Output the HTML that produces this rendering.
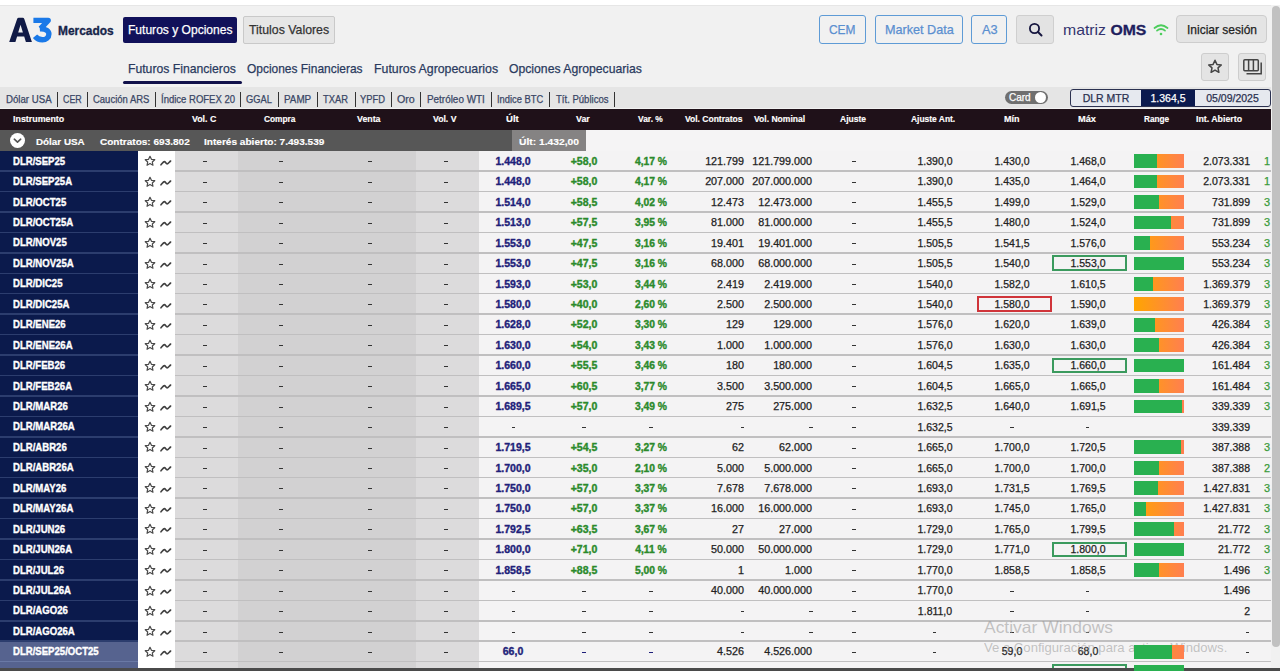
<!DOCTYPE html><html><head><meta charset="utf-8"><style>
*{margin:0;padding:0;box-sizing:border-box}
html,body{width:1280px;height:671px;overflow:hidden;background:#f1f1f1;font-family:"Liberation Sans",sans-serif}
.a{position:absolute;white-space:nowrap}
.t{position:absolute;white-space:nowrap;line-height:1;-webkit-text-stroke:0.25px currentColor}
.t[style*="bold"]{-webkit-text-stroke:0.35px currentColor}
</style></head><body><div class="a" style="left:0;top:0;width:1280px;height:5px;background:#fff"></div>
<div class="a" style="left:0;top:5px;width:1280px;height:1px;background:#e6e6e6"></div>
<svg class="a" style="left:0;top:0" width="60" height="50" viewBox="0 0 60 50"><path fill-rule="evenodd" fill="#101a46" d="M9.2 42 L17.1 18.9 Q17.5 17.7 18.7 17.7 L22.7 17.7 Q23.9 17.7 24.3 18.9 L31.9 42 L25.9 42 L24.2 36.6 L17.1 36.6 L15.4 42 Z M18.2 32.4 L22.9 32.4 L20.55 24.8 Z"></path><path fill="none" stroke="#1a79e8" stroke-width="5.4" stroke-linejoin="round" d="M33.4 20.4 L48.2 20.4 L40.6 28.6"></path><path fill="none" stroke="#1a79e8" stroke-width="5.4" d="M39.8 28.9 C46 28.5 48.9 31 48.9 34 C48.9 37.6 46 39.8 42.4 39.8 C39.5 39.8 37 38.8 35 36.3"></path></svg>
<div class="t" style="left: 58.4px; top: 24px; font-size: 13.5px; font-weight: bold; color: rgb(23, 37, 74); transform: scaleX(0.8821); transform-origin: 0px 0px;">Mercados</div>
<div class="a" style="left:123px;top:17px;width:114px;height:26px;background:#11115a;border-radius:2px"></div>
<div class="t" style="left: 128.3px; top: 23.3px; font-size: 13.5px; color: rgb(255, 255, 255); transform: scaleX(0.8927); transform-origin: 0px 0px;">Futuros y Opciones</div>
<div class="a" style="left:243px;top:16px;width:92px;height:28px;background:#e6e6e6;border:1px solid #c9c9c9;border-radius:2px"></div>
<div class="t" style="left: 248.8px; top: 23.3px; font-size: 13.5px; color: rgb(51, 51, 51); transform: scaleX(0.9123); transform-origin: 0px 0px;">Titulos Valores</div>
<div class="t" style="left: 128.2px; top: 62.2px; font-size: 13px; color: rgb(42, 58, 94); transform: scaleX(0.9383); transform-origin: 0px 0px;">Futuros Financieros</div>
<div class="t" style="left: 246.9px; top: 62.2px; font-size: 13px; color: rgb(42, 58, 94); transform: scaleX(0.9194); transform-origin: 0px 0px;">Opciones Financieras</div>
<div class="t" style="left: 374px; top: 62.2px; font-size: 13px; color: rgb(42, 58, 94); transform: scaleX(0.9488); transform-origin: 0px 0px;">Futuros Agropecuarios</div>
<div class="t" style="left: 509px; top: 62.2px; font-size: 13px; color: rgb(42, 58, 94); transform: scaleX(0.9382); transform-origin: 0px 0px;">Opciones Agropecuarias</div>
<div class="a" style="left:123px;top:81px;width:119px;height:2.5px;background:#10104a;border-radius:2px"></div>
<div class="a" style="left:819px;top:15px;width:47px;height:28.5px;border:1.5px solid #5e9bd6;border-radius:3px"></div>
<div class="t" style="left: 829px; top: 23.2px; font-size: 13px; color: rgb(90, 143, 208); transform: scaleX(0.9173); transform-origin: 0px 0px;">CEM</div>
<div class="a" style="left:875px;top:15px;width:88px;height:28.5px;border:1.5px solid #5e9bd6;border-radius:3px"></div>
<div class="t" style="left: 884.8px; top: 23.2px; font-size: 13px; color: rgb(90, 143, 208); transform: scaleX(0.9716); transform-origin: 0px 0px;">Market Data</div>
<div class="a" style="left:971px;top:15px;width:36px;height:28.5px;border:1.5px solid #5e9bd6;border-radius:3px"></div>
<div class="t" style="left: 981.9px; top: 23.2px; font-size: 13px; color: rgb(90, 143, 208); transform: scaleX(0.9807); transform-origin: 0px 0px;">A3</div>
<div class="a" style="left:1016px;top:15px;width:38px;height:29px;background:#e3e3e3;border:1px solid #cfcfcf;border-radius:3px"></div>
<svg class="a" style="left:1028.2px;top:21.7px" width="16" height="16" viewBox="0 0 16 16"><circle cx="6.5" cy="6.5" r="4.6" fill="none" stroke="#16163f" stroke-width="1.8"></circle><line x1="10" y1="10" x2="13.5" y2="13.5" stroke="#16163f" stroke-width="2" stroke-linecap="round"></line></svg>
<div class="t" style="left: 1062.6px; top: 21.5px; font-size: 15px; color: rgb(52, 52, 110); -webkit-text-stroke: 0px; transform: scaleX(1.0534); transform-origin: 0px 0px;">matriz <b style="color:#1f1f5e;-webkit-text-stroke:0.3px #1f1f5e">OMS</b></div>
<svg class="a" style="left:1153px;top:23px" width="16" height="13" viewBox="0 0 16 13"><path d="M1.5 5 Q8 -0.5 14.5 5" fill="none" stroke="#4ccd5c" stroke-width="1.7" stroke-linecap="round"></path><path d="M4 7.7 Q8 4.3 12 7.7" fill="none" stroke="#4ccd5c" stroke-width="1.7" stroke-linecap="round"></path><circle cx="8" cy="11" r="1.3" fill="#4ccd5c"></circle></svg>
<div class="a" style="left:1176px;top:15px;width:91px;height:28px;background:#e4e4e4;border:1px solid #cdcdcd;border-radius:4px"></div>
<div class="t" style="left: 1186.6px; top: 23.2px; font-size: 13px; color: rgb(34, 34, 34); transform: scaleX(0.9226); transform-origin: 0px 0px;">Iniciar sesión</div>
<div class="a" style="left:1201px;top:53px;width:28px;height:28px;background:#e4e4e4;border:1px solid #cdcdcd;border-radius:3px"></div>
<svg class="a" style="left:1207px;top:59px" width="16" height="16" viewBox="0 0 16 16"><path d="M8 1.3 L9.9 5.4 L14.3 5.9 L11 8.9 L11.9 13.3 L8 11.1 L4.1 13.3 L5 8.9 L1.7 5.9 L6.1 5.4 Z" fill="none" stroke="#444" stroke-width="1.5" stroke-linejoin="round"></path></svg>
<div class="a" style="left:1238px;top:53px;width:28px;height:28px;background:#e4e4e4;border:1px solid #cdcdcd;border-radius:3px"></div>
<svg class="a" style="left:1243px;top:59px" width="20" height="16" viewBox="0 0 20 16"><rect x="0.8" y="0.8" width="14.5" height="11" rx="1" fill="none" stroke="#444" stroke-width="1.5"></rect><line x1="5.6" y1="0.8" x2="5.6" y2="11.8" stroke="#444" stroke-width="1.5"></line><line x1="10.4" y1="0.8" x2="10.4" y2="11.8" stroke="#444" stroke-width="1.5"></line><path d="M18.2 3.5V14.8H3.5" fill="none" stroke="#444" stroke-width="1.5"></path></svg>
<div class="a" style="left:0;top:87px;width:1271px;height:21px;background:#e5e5e5"></div>
<div class="t" style="left: 5.6px; top: 94.5px; font-size: 10px; color: rgb(58, 71, 102); transform: scaleX(0.9661); transform-origin: 0px 0px;">Dólar USA</div>
<div class="a" style="left:57.3px;top:92px;width:1px;height:14.5px;background:#333"></div>
<div class="t" style="left: 62.5px; top: 94.5px; font-size: 10px; color: rgb(58, 71, 102); transform: scaleX(0.8876); transform-origin: 0px 0px;">CER</div>
<div class="a" style="left:87.0px;top:92px;width:1px;height:14.5px;background:#333"></div>
<div class="t" style="left: 93px; top: 94.5px; font-size: 10px; color: rgb(58, 71, 102); transform: scaleX(0.9481); transform-origin: 0px 0px;">Caución ARS</div>
<div class="a" style="left:154.8px;top:92px;width:1px;height:14.5px;background:#333"></div>
<div class="t" style="left: 161px; top: 94.5px; font-size: 10px; color: rgb(58, 71, 102); transform: scaleX(0.951); transform-origin: 0px 0px;">Índice ROFEX 20</div>
<div class="a" style="left:240.1px;top:92px;width:1px;height:14.5px;background:#333"></div>
<div class="t" style="left: 246px; top: 94.5px; font-size: 10px; color: rgb(58, 71, 102); transform: scaleX(0.9318); transform-origin: 0px 0px;">GGAL</div>
<div class="a" style="left:277.5px;top:92px;width:1px;height:14.5px;background:#333"></div>
<div class="t" style="left: 284.4px; top: 94.5px; font-size: 10px; color: rgb(58, 71, 102); transform: scaleX(0.9852); transform-origin: 0px 0px;">PAMP</div>
<div class="a" style="left:317.3px;top:92px;width:1px;height:14.5px;background:#333"></div>
<div class="t" style="left: 323.4px; top: 94.5px; font-size: 10px; color: rgb(58, 71, 102); transform: scaleX(0.9373); transform-origin: 0px 0px;">TXAR</div>
<div class="a" style="left:354.8px;top:92px;width:1px;height:14.5px;background:#333"></div>
<div class="t" style="left: 360.3px; top: 94.5px; font-size: 10px; color: rgb(58, 71, 102); transform: scaleX(0.9373); transform-origin: 0px 0px;">YPFD</div>
<div class="a" style="left:391.1px;top:92px;width:1px;height:14.5px;background:#333"></div>
<div class="t" style="left: 397.2px; top: 94.5px; font-size: 10px; color: rgb(58, 71, 102); transform: scaleX(1.0677); transform-origin: 0px 0px;">Oro</div>
<div class="a" style="left:420.1px;top:92px;width:1px;height:14.5px;background:#333"></div>
<div class="t" style="left: 426.9px; top: 94.5px; font-size: 10px; color: rgb(58, 71, 102); transform: scaleX(0.9904); transform-origin: 0px 0px;">Petróleo WTI</div>
<div class="a" style="left:490.5px;top:92px;width:1px;height:14.5px;background:#333"></div>
<div class="t" style="left: 497.2px; top: 94.5px; font-size: 10px; color: rgb(58, 71, 102); transform: scaleX(0.9339); transform-origin: 0px 0px;">Indice BTC</div>
<div class="a" style="left:549.2px;top:92px;width:1px;height:14.5px;background:#333"></div>
<div class="t" style="left: 555.6px; top: 94.5px; font-size: 10px; color: rgb(58, 71, 102); transform: scaleX(0.954); transform-origin: 0px 0px;">Tít. Públicos</div>
<div class="a" style="left:613.9px;top:92px;width:1px;height:14.5px;background:#333"></div>
<div class="a" style="left:1004.5px;top:91px;width:43.5px;height:13px;background:#6f6f6f;border-radius:7px"></div>
<div class="t" style="left:1009px;top:93px;font-size:10px;color:#fff">Card</div>
<div class="a" style="left:1035px;top:92px;width:11px;height:11px;background:#fff;border-radius:50%"></div>
<div class="a" style="left:1069.5px;top:89px;width:201px;height:17.5px;background:#e6e9ef;border:1.5px solid #2b3150;border-radius:3px;overflow:hidden"><div class="a" style="left:70.5px;top:0;width:53.5px;height:100%;background:#0b1a4e"></div></div>
<div class="t" style="left:1071px;width:70px;text-align:center;top:93px;font-size:10.5px;color:#2b3150">DLR MTR</div>
<div class="t" style="left:1141px;width:54px;text-align:center;top:93px;font-size:10.5px;color:#fff">1.364,5</div>
<div class="t" style="left:1195px;width:75px;text-align:center;top:93px;font-size:10.5px;color:#2b3150">05/09/2025</div>
<div class="a" style="left:0;top:109px;width:1271px;height:20.5px;background:#1f1119"></div>
<div class="t" style="left: 13px; top: 115px; font-size: 9px; font-weight: bold; color: rgb(255, 255, 255); -webkit-text-stroke: 0.15px rgb(255, 255, 255); transform: scaleX(0.9853); transform-origin: 0px 0px;">Instrumento</div>
<div class="t" style="left: 192px; top: 115px; font-size: 9px; font-weight: bold; color: rgb(255, 255, 255); -webkit-text-stroke: 0.15px rgb(255, 255, 255); transform: scaleX(0.9761); transform-origin: 0px 0px;">Vol. C</div>
<div class="t" style="left: 264.25px; top: 115px; font-size: 9px; font-weight: bold; color: rgb(255, 255, 255); -webkit-text-stroke: 0.15px rgb(255, 255, 255); transform: scaleX(0.926); transform-origin: 0px 0px;">Compra</div>
<div class="t" style="left: 357px; top: 115px; font-size: 9px; font-weight: bold; color: rgb(255, 255, 255); -webkit-text-stroke: 0.15px rgb(255, 255, 255); transform: scaleX(0.9785); transform-origin: 0px 0px;">Venta</div>
<div class="t" style="left: 433.25px; top: 115px; font-size: 9px; font-weight: bold; color: rgb(255, 255, 255); -webkit-text-stroke: 0.15px rgb(255, 255, 255); transform: scaleX(0.9653); transform-origin: 0px 0px;">Vol. V</div>
<div class="t" style="left: 505.5px; top: 115px; font-size: 9px; font-weight: bold; color: rgb(255, 255, 255); -webkit-text-stroke: 0.15px rgb(255, 255, 255); transform: scaleX(1.0625); transform-origin: 0px 0px;">Últ</div>
<div class="t" style="left: 576.25px; top: 115px; font-size: 9px; font-weight: bold; color: rgb(255, 255, 255); -webkit-text-stroke: 0.15px rgb(255, 255, 255); transform: scaleX(0.981); transform-origin: 0px 0px;">Var</div>
<div class="t" style="left: 638px; top: 115px; font-size: 9px; font-weight: bold; color: rgb(255, 255, 255); -webkit-text-stroke: 0.15px rgb(255, 255, 255); transform: scaleX(0.9347); transform-origin: 0px 0px;">Var. %</div>
<div class="t" style="left: 684.5px; top: 115px; font-size: 9px; font-weight: bold; color: rgb(255, 255, 255); -webkit-text-stroke: 0.15px rgb(255, 255, 255); transform: scaleX(0.945); transform-origin: 0px 0px;">Vol. Contratos</div>
<div class="t" style="left: 753.7px; top: 115px; font-size: 9px; font-weight: bold; color: rgb(255, 255, 255); -webkit-text-stroke: 0.15px rgb(255, 255, 255); transform: scaleX(0.949); transform-origin: 0px 0px;">Vol. Nominal</div>
<div class="t" style="left: 840.4px; top: 115px; font-size: 9px; font-weight: bold; color: rgb(255, 255, 255); -webkit-text-stroke: 0.15px rgb(255, 255, 255); transform: scaleX(0.9449); transform-origin: 0px 0px;">Ajuste</div>
<div class="t" style="left: 911.3px; top: 115px; font-size: 9px; font-weight: bold; color: rgb(255, 255, 255); -webkit-text-stroke: 0.15px rgb(255, 255, 255); transform: scaleX(0.937); transform-origin: 0px 0px;">Ajuste Ant.</div>
<div class="t" style="left: 1003.9px; top: 115px; font-size: 9px; font-weight: bold; color: rgb(255, 255, 255); -webkit-text-stroke: 0.15px rgb(255, 255, 255); transform: scaleX(1); transform-origin: 0px 0px;">Mín</div>
<div class="t" style="left: 1078px; top: 115px; font-size: 9px; font-weight: bold; color: rgb(255, 255, 255); -webkit-text-stroke: 0.15px rgb(255, 255, 255); transform: scaleX(1.0277); transform-origin: 0px 0px;">Máx</div>
<div class="t" style="left: 1143.5px; top: 115px; font-size: 9px; font-weight: bold; color: rgb(255, 255, 255); -webkit-text-stroke: 0.15px rgb(255, 255, 255); transform: scaleX(0.9158); transform-origin: 0px 0px;">Range</div>
<div class="t" style="left: 1196px; top: 115px; font-size: 9px; font-weight: bold; color: rgb(255, 255, 255); -webkit-text-stroke: 0.15px rgb(255, 255, 255); transform: scaleX(0.9752); transform-origin: 0px 0px;">Int. Abierto</div>
<div class="a" style="left:0;top:129.5px;width:512px;height:21px;background:#575757"></div>
<div class="a" style="left:512px;top:129.5px;width:74px;height:21px;background:#858383"></div>
<div class="a" style="left:586px;top:129.5px;width:685px;height:21px;background:#f5f4f5"></div>
<div class="a" style="left:10px;top:133px;width:15px;height:15px;background:#fff;border-radius:50%"></div>
<svg class="a" style="left:10px;top:133px" width="15" height="15" viewBox="0 0 15 15"><path d="M4.3 6.2 7.5 9.2 10.7 6.2" fill="none" stroke="#555" stroke-width="1.6" stroke-linecap="round" stroke-linejoin="round"></path></svg>
<div class="t" style="left: 35.75px; top: 136.6px; font-size: 9.8px; font-weight: bold; color: rgb(255, 255, 255); -webkit-text-stroke: 0.15px rgb(255, 255, 255); transform: scaleX(1.0041); transform-origin: 0px 0px;">Dólar USA</div>
<div class="t" style="left: 99.5px; top: 136.6px; font-size: 9.8px; font-weight: bold; color: rgb(255, 255, 255); -webkit-text-stroke: 0.15px rgb(255, 255, 255); transform: scaleX(1.0237); transform-origin: 0px 0px;">Contratos: 693.802</div>
<div class="t" style="left: 203.75px; top: 136.6px; font-size: 9.8px; font-weight: bold; color: rgb(255, 255, 255); -webkit-text-stroke: 0.15px rgb(255, 255, 255); transform: scaleX(1.0287); transform-origin: 0px 0px;">Interés abierto: 7.493.539</div>
<div class="t" style="left: 519px; top: 137px; font-size: 9.8px; font-weight: bold; color: rgb(255, 255, 255); -webkit-text-stroke: 0.15px rgb(255, 255, 255); transform: scaleX(1.0492); transform-origin: 0px 0px;">Últ: 1.432,00</div>
<div class="a" style="left:0;top:150.5px;width:138px;height:520.5px;background:#0b1a4c"></div>
<div class="a" style="left:138px;top:150.5px;width:37px;height:520.5px;background:#fff"></div>
<div class="a" style="left:175px;top:150.5px;width:63px;height:520.5px;background:#dcdbdc"></div>
<div class="a" style="left:238px;top:150.5px;width:178px;height:520.5px;background:#d2d1d2"></div>
<div class="a" style="left:416px;top:150.5px;width:63px;height:520.5px;background:#dcdbdc"></div>
<div class="a" style="left:479px;top:150.5px;width:792px;height:520.5px;background:#f4f3f4"></div>
<div class="a" style="left:0;top:170.34px;width:138px;height:1.5px;background:#2c3d6e"></div>
<div class="a" style="left:175px;top:170.34px;width:1096px;height:1.5px;background:#c0bfc0"></div>
<div class="t" style="left:13px;top:156.70px;font-size:10.3px;font-weight:bold;color:#fff;transform:scaleX(0.93);transform-origin:0 0">DLR/SEP25</div>
<svg class="a" style="left:143.8px;top:155.30px" width="12" height="12" viewBox="0 0 24 24"><path d="M12 2.5l2.9 6.1 6.6.8-4.9 4.5 1.3 6.6L12 17.2l-5.9 3.3 1.3-6.6-4.9-4.5 6.6-.8z" fill="none" stroke="#4a4a4a" stroke-width="2.4" stroke-linejoin="round"></path></svg>
<svg class="a" style="left:159.5px;top:158.50px" width="12" height="7" viewBox="0 0 12 7"><path d="M1 5.8 C2.3 4.3 3.4 2.6 4.4 2.6 C5.5 2.6 6 4.9 7.1 4.9 C8.2 4.9 9.4 2.9 10.6 2" fill="none" stroke="#404040" stroke-width="1.6" stroke-linecap="round"></path></svg>
<div class="a" style="left:203.25px;top:161px;width:3.5px;height:1px;background:#333"></div>
<div class="a" style="left:279.25px;top:161px;width:3.5px;height:1px;background:#333"></div>
<div class="a" style="left:368.25px;top:161px;width:3.5px;height:1px;background:#333"></div>
<div class="a" style="left:444.25px;top:161px;width:3.5px;height:1px;background:#333"></div>
<div class="t" style="left:473.30px;width:80px;text-align:center;top:156.90px;font-size:10px;font-weight:bold;color:#1f1f7a;transform:scaleX(1.055);transform-origin:50% 0">1.448,0</div>
<div class="t" style="left:544.20px;width:80px;text-align:center;top:156.90px;font-size:10px;font-weight:bold;color:#2b8a2b;transform:scaleX(1.05);transform-origin:50% 0">+58,0</div>
<div class="t" style="left:611.00px;width:80px;text-align:center;top:156.90px;font-size:10px;font-weight:bold;color:#2b8a2b;transform:scaleX(1.03);transform-origin:50% 0">4,17 %</div>
<div class="t" style="left:624.00px;width:120px;text-align:right;top:156.90px;font-size:10px;font-weight:normal;color:#222;transform:scaleX(1.075);transform-origin:100% 0">121.799</div>
<div class="t" style="left:692.30px;width:120px;text-align:right;top:156.90px;font-size:10px;font-weight:normal;color:#222;transform:scaleX(1.075);transform-origin:100% 0">121.799.000</div>
<div class="a" style="left:852.25px;top:161px;width:3.5px;height:1px;background:#333"></div>
<div class="t" style="left:894.50px;width:80px;text-align:center;top:156.90px;font-size:10px;font-weight:normal;color:#222;transform:scaleX(1.05);transform-origin:50% 0">1.390,0</div>
<div class="t" style="left:972.00px;width:80px;text-align:center;top:156.90px;font-size:10px;font-weight:normal;color:#222;transform:scaleX(1.05);transform-origin:50% 0">1.430,0</div>
<div class="t" style="left:1047.50px;width:80px;text-align:center;top:156.90px;font-size:10px;font-weight:normal;color:#222;transform:scaleX(1.05);transform-origin:50% 0">1.468,0</div>
<div class="t" style="left:1129.50px;width:120px;text-align:right;top:156.90px;font-size:10px;font-weight:normal;color:#222;transform:scaleX(1.05);transform-origin:100% 0">2.073.331</div>
<div class="t" style="left:1264.00px;top:156.90px;font-size:10px;font-weight:normal;color:#3a9a3a;transform:scaleX(1.09);transform-origin:0 0">1</div>
<div class="a" style="left:0;top:190.78px;width:138px;height:1.5px;background:#2c3d6e"></div>
<div class="a" style="left:175px;top:190.78px;width:1096px;height:1.5px;background:#c0bfc0"></div>
<div class="t" style="left:13px;top:177.14px;font-size:10.3px;font-weight:bold;color:#fff;transform:scaleX(0.93);transform-origin:0 0">DLR/SEP25A</div>
<svg class="a" style="left:143.8px;top:175.74px" width="12" height="12" viewBox="0 0 24 24"><path d="M12 2.5l2.9 6.1 6.6.8-4.9 4.5 1.3 6.6L12 17.2l-5.9 3.3 1.3-6.6-4.9-4.5 6.6-.8z" fill="none" stroke="#4a4a4a" stroke-width="2.4" stroke-linejoin="round"></path></svg>
<svg class="a" style="left:159.5px;top:178.94px" width="12" height="7" viewBox="0 0 12 7"><path d="M1 5.8 C2.3 4.3 3.4 2.6 4.4 2.6 C5.5 2.6 6 4.9 7.1 4.9 C8.2 4.9 9.4 2.9 10.6 2" fill="none" stroke="#404040" stroke-width="1.6" stroke-linecap="round"></path></svg>
<div class="a" style="left:203.25px;top:182px;width:3.5px;height:1px;background:#333"></div>
<div class="a" style="left:279.25px;top:182px;width:3.5px;height:1px;background:#333"></div>
<div class="a" style="left:368.25px;top:182px;width:3.5px;height:1px;background:#333"></div>
<div class="a" style="left:444.25px;top:182px;width:3.5px;height:1px;background:#333"></div>
<div class="t" style="left:473.30px;width:80px;text-align:center;top:177.34px;font-size:10px;font-weight:bold;color:#1f1f7a;transform:scaleX(1.055);transform-origin:50% 0">1.448,0</div>
<div class="t" style="left:544.20px;width:80px;text-align:center;top:177.34px;font-size:10px;font-weight:bold;color:#2b8a2b;transform:scaleX(1.05);transform-origin:50% 0">+58,0</div>
<div class="t" style="left:611.00px;width:80px;text-align:center;top:177.34px;font-size:10px;font-weight:bold;color:#2b8a2b;transform:scaleX(1.03);transform-origin:50% 0">4,17 %</div>
<div class="t" style="left:624.00px;width:120px;text-align:right;top:177.34px;font-size:10px;font-weight:normal;color:#222;transform:scaleX(1.075);transform-origin:100% 0">207.000</div>
<div class="t" style="left:692.30px;width:120px;text-align:right;top:177.34px;font-size:10px;font-weight:normal;color:#222;transform:scaleX(1.075);transform-origin:100% 0">207.000.000</div>
<div class="a" style="left:852.25px;top:182px;width:3.5px;height:1px;background:#333"></div>
<div class="t" style="left:894.50px;width:80px;text-align:center;top:177.34px;font-size:10px;font-weight:normal;color:#222;transform:scaleX(1.05);transform-origin:50% 0">1.390,0</div>
<div class="t" style="left:972.00px;width:80px;text-align:center;top:177.34px;font-size:10px;font-weight:normal;color:#222;transform:scaleX(1.05);transform-origin:50% 0">1.435,0</div>
<div class="t" style="left:1047.50px;width:80px;text-align:center;top:177.34px;font-size:10px;font-weight:normal;color:#222;transform:scaleX(1.05);transform-origin:50% 0">1.464,0</div>
<div class="t" style="left:1129.50px;width:120px;text-align:right;top:177.34px;font-size:10px;font-weight:normal;color:#222;transform:scaleX(1.05);transform-origin:100% 0">2.073.331</div>
<div class="t" style="left:1264.00px;top:177.34px;font-size:10px;font-weight:normal;color:#3a9a3a;transform:scaleX(1.09);transform-origin:0 0">1</div>
<div class="a" style="left:0;top:211.22px;width:138px;height:1.5px;background:#2c3d6e"></div>
<div class="a" style="left:175px;top:211.22px;width:1096px;height:1.5px;background:#c0bfc0"></div>
<div class="t" style="left:13px;top:197.58px;font-size:10.3px;font-weight:bold;color:#fff;transform:scaleX(0.93);transform-origin:0 0">DLR/OCT25</div>
<svg class="a" style="left:143.8px;top:196.18px" width="12" height="12" viewBox="0 0 24 24"><path d="M12 2.5l2.9 6.1 6.6.8-4.9 4.5 1.3 6.6L12 17.2l-5.9 3.3 1.3-6.6-4.9-4.5 6.6-.8z" fill="none" stroke="#4a4a4a" stroke-width="2.4" stroke-linejoin="round"></path></svg>
<svg class="a" style="left:159.5px;top:199.38px" width="12" height="7" viewBox="0 0 12 7"><path d="M1 5.8 C2.3 4.3 3.4 2.6 4.4 2.6 C5.5 2.6 6 4.9 7.1 4.9 C8.2 4.9 9.4 2.9 10.6 2" fill="none" stroke="#404040" stroke-width="1.6" stroke-linecap="round"></path></svg>
<div class="a" style="left:203.25px;top:202px;width:3.5px;height:1px;background:#333"></div>
<div class="a" style="left:279.25px;top:202px;width:3.5px;height:1px;background:#333"></div>
<div class="a" style="left:368.25px;top:202px;width:3.5px;height:1px;background:#333"></div>
<div class="a" style="left:444.25px;top:202px;width:3.5px;height:1px;background:#333"></div>
<div class="t" style="left:473.30px;width:80px;text-align:center;top:197.78px;font-size:10px;font-weight:bold;color:#1f1f7a;transform:scaleX(1.055);transform-origin:50% 0">1.514,0</div>
<div class="t" style="left:544.20px;width:80px;text-align:center;top:197.78px;font-size:10px;font-weight:bold;color:#2b8a2b;transform:scaleX(1.05);transform-origin:50% 0">+58,5</div>
<div class="t" style="left:611.00px;width:80px;text-align:center;top:197.78px;font-size:10px;font-weight:bold;color:#2b8a2b;transform:scaleX(1.03);transform-origin:50% 0">4,02 %</div>
<div class="t" style="left:624.00px;width:120px;text-align:right;top:197.78px;font-size:10px;font-weight:normal;color:#222;transform:scaleX(1.075);transform-origin:100% 0">12.473</div>
<div class="t" style="left:692.30px;width:120px;text-align:right;top:197.78px;font-size:10px;font-weight:normal;color:#222;transform:scaleX(1.075);transform-origin:100% 0">12.473.000</div>
<div class="a" style="left:852.25px;top:202px;width:3.5px;height:1px;background:#333"></div>
<div class="t" style="left:894.50px;width:80px;text-align:center;top:197.78px;font-size:10px;font-weight:normal;color:#222;transform:scaleX(1.05);transform-origin:50% 0">1.455,5</div>
<div class="t" style="left:972.00px;width:80px;text-align:center;top:197.78px;font-size:10px;font-weight:normal;color:#222;transform:scaleX(1.05);transform-origin:50% 0">1.499,0</div>
<div class="t" style="left:1047.50px;width:80px;text-align:center;top:197.78px;font-size:10px;font-weight:normal;color:#222;transform:scaleX(1.05);transform-origin:50% 0">1.529,0</div>
<div class="t" style="left:1129.50px;width:120px;text-align:right;top:197.78px;font-size:10px;font-weight:normal;color:#222;transform:scaleX(1.05);transform-origin:100% 0">731.899</div>
<div class="t" style="left:1264.00px;top:197.78px;font-size:10px;font-weight:normal;color:#3a9a3a;transform:scaleX(1.09);transform-origin:0 0">3</div>
<div class="a" style="left:0;top:231.66px;width:138px;height:1.5px;background:#2c3d6e"></div>
<div class="a" style="left:175px;top:231.66px;width:1096px;height:1.5px;background:#c0bfc0"></div>
<div class="t" style="left:13px;top:218.02px;font-size:10.3px;font-weight:bold;color:#fff;transform:scaleX(0.93);transform-origin:0 0">DLR/OCT25A</div>
<svg class="a" style="left:143.8px;top:216.62px" width="12" height="12" viewBox="0 0 24 24"><path d="M12 2.5l2.9 6.1 6.6.8-4.9 4.5 1.3 6.6L12 17.2l-5.9 3.3 1.3-6.6-4.9-4.5 6.6-.8z" fill="none" stroke="#4a4a4a" stroke-width="2.4" stroke-linejoin="round"></path></svg>
<svg class="a" style="left:159.5px;top:219.82px" width="12" height="7" viewBox="0 0 12 7"><path d="M1 5.8 C2.3 4.3 3.4 2.6 4.4 2.6 C5.5 2.6 6 4.9 7.1 4.9 C8.2 4.9 9.4 2.9 10.6 2" fill="none" stroke="#404040" stroke-width="1.6" stroke-linecap="round"></path></svg>
<div class="a" style="left:203.25px;top:223px;width:3.5px;height:1px;background:#333"></div>
<div class="a" style="left:279.25px;top:223px;width:3.5px;height:1px;background:#333"></div>
<div class="a" style="left:368.25px;top:223px;width:3.5px;height:1px;background:#333"></div>
<div class="a" style="left:444.25px;top:223px;width:3.5px;height:1px;background:#333"></div>
<div class="t" style="left:473.30px;width:80px;text-align:center;top:218.22px;font-size:10px;font-weight:bold;color:#1f1f7a;transform:scaleX(1.055);transform-origin:50% 0">1.513,0</div>
<div class="t" style="left:544.20px;width:80px;text-align:center;top:218.22px;font-size:10px;font-weight:bold;color:#2b8a2b;transform:scaleX(1.05);transform-origin:50% 0">+57,5</div>
<div class="t" style="left:611.00px;width:80px;text-align:center;top:218.22px;font-size:10px;font-weight:bold;color:#2b8a2b;transform:scaleX(1.03);transform-origin:50% 0">3,95 %</div>
<div class="t" style="left:624.00px;width:120px;text-align:right;top:218.22px;font-size:10px;font-weight:normal;color:#222;transform:scaleX(1.075);transform-origin:100% 0">81.000</div>
<div class="t" style="left:692.30px;width:120px;text-align:right;top:218.22px;font-size:10px;font-weight:normal;color:#222;transform:scaleX(1.075);transform-origin:100% 0">81.000.000</div>
<div class="a" style="left:852.25px;top:223px;width:3.5px;height:1px;background:#333"></div>
<div class="t" style="left:894.50px;width:80px;text-align:center;top:218.22px;font-size:10px;font-weight:normal;color:#222;transform:scaleX(1.05);transform-origin:50% 0">1.455,5</div>
<div class="t" style="left:972.00px;width:80px;text-align:center;top:218.22px;font-size:10px;font-weight:normal;color:#222;transform:scaleX(1.05);transform-origin:50% 0">1.480,0</div>
<div class="t" style="left:1047.50px;width:80px;text-align:center;top:218.22px;font-size:10px;font-weight:normal;color:#222;transform:scaleX(1.05);transform-origin:50% 0">1.524,0</div>
<div class="t" style="left:1129.50px;width:120px;text-align:right;top:218.22px;font-size:10px;font-weight:normal;color:#222;transform:scaleX(1.05);transform-origin:100% 0">731.899</div>
<div class="t" style="left:1264.00px;top:218.22px;font-size:10px;font-weight:normal;color:#3a9a3a;transform:scaleX(1.09);transform-origin:0 0">3</div>
<div class="a" style="left:0;top:252.10px;width:138px;height:1.5px;background:#2c3d6e"></div>
<div class="a" style="left:175px;top:252.10px;width:1096px;height:1.5px;background:#c0bfc0"></div>
<div class="t" style="left:13px;top:238.46px;font-size:10.3px;font-weight:bold;color:#fff;transform:scaleX(0.93);transform-origin:0 0">DLR/NOV25</div>
<svg class="a" style="left:143.8px;top:237.06px" width="12" height="12" viewBox="0 0 24 24"><path d="M12 2.5l2.9 6.1 6.6.8-4.9 4.5 1.3 6.6L12 17.2l-5.9 3.3 1.3-6.6-4.9-4.5 6.6-.8z" fill="none" stroke="#4a4a4a" stroke-width="2.4" stroke-linejoin="round"></path></svg>
<svg class="a" style="left:159.5px;top:240.26px" width="12" height="7" viewBox="0 0 12 7"><path d="M1 5.8 C2.3 4.3 3.4 2.6 4.4 2.6 C5.5 2.6 6 4.9 7.1 4.9 C8.2 4.9 9.4 2.9 10.6 2" fill="none" stroke="#404040" stroke-width="1.6" stroke-linecap="round"></path></svg>
<div class="a" style="left:203.25px;top:243px;width:3.5px;height:1px;background:#333"></div>
<div class="a" style="left:279.25px;top:243px;width:3.5px;height:1px;background:#333"></div>
<div class="a" style="left:368.25px;top:243px;width:3.5px;height:1px;background:#333"></div>
<div class="a" style="left:444.25px;top:243px;width:3.5px;height:1px;background:#333"></div>
<div class="t" style="left:473.30px;width:80px;text-align:center;top:238.66px;font-size:10px;font-weight:bold;color:#1f1f7a;transform:scaleX(1.055);transform-origin:50% 0">1.553,0</div>
<div class="t" style="left:544.20px;width:80px;text-align:center;top:238.66px;font-size:10px;font-weight:bold;color:#2b8a2b;transform:scaleX(1.05);transform-origin:50% 0">+47,5</div>
<div class="t" style="left:611.00px;width:80px;text-align:center;top:238.66px;font-size:10px;font-weight:bold;color:#2b8a2b;transform:scaleX(1.03);transform-origin:50% 0">3,16 %</div>
<div class="t" style="left:624.00px;width:120px;text-align:right;top:238.66px;font-size:10px;font-weight:normal;color:#222;transform:scaleX(1.075);transform-origin:100% 0">19.401</div>
<div class="t" style="left:692.30px;width:120px;text-align:right;top:238.66px;font-size:10px;font-weight:normal;color:#222;transform:scaleX(1.075);transform-origin:100% 0">19.401.000</div>
<div class="a" style="left:852.25px;top:243px;width:3.5px;height:1px;background:#333"></div>
<div class="t" style="left:894.50px;width:80px;text-align:center;top:238.66px;font-size:10px;font-weight:normal;color:#222;transform:scaleX(1.05);transform-origin:50% 0">1.505,5</div>
<div class="t" style="left:972.00px;width:80px;text-align:center;top:238.66px;font-size:10px;font-weight:normal;color:#222;transform:scaleX(1.05);transform-origin:50% 0">1.541,5</div>
<div class="t" style="left:1047.50px;width:80px;text-align:center;top:238.66px;font-size:10px;font-weight:normal;color:#222;transform:scaleX(1.05);transform-origin:50% 0">1.576,0</div>
<div class="t" style="left:1129.50px;width:120px;text-align:right;top:238.66px;font-size:10px;font-weight:normal;color:#222;transform:scaleX(1.05);transform-origin:100% 0">553.234</div>
<div class="t" style="left:1264.00px;top:238.66px;font-size:10px;font-weight:normal;color:#3a9a3a;transform:scaleX(1.09);transform-origin:0 0">3</div>
<div class="a" style="left:0;top:272.54px;width:138px;height:1.5px;background:#2c3d6e"></div>
<div class="a" style="left:175px;top:272.54px;width:1096px;height:1.5px;background:#c0bfc0"></div>
<div class="t" style="left:13px;top:258.90px;font-size:10.3px;font-weight:bold;color:#fff;transform:scaleX(0.93);transform-origin:0 0">DLR/NOV25A</div>
<svg class="a" style="left:143.8px;top:257.50px" width="12" height="12" viewBox="0 0 24 24"><path d="M12 2.5l2.9 6.1 6.6.8-4.9 4.5 1.3 6.6L12 17.2l-5.9 3.3 1.3-6.6-4.9-4.5 6.6-.8z" fill="none" stroke="#4a4a4a" stroke-width="2.4" stroke-linejoin="round"></path></svg>
<svg class="a" style="left:159.5px;top:260.70px" width="12" height="7" viewBox="0 0 12 7"><path d="M1 5.8 C2.3 4.3 3.4 2.6 4.4 2.6 C5.5 2.6 6 4.9 7.1 4.9 C8.2 4.9 9.4 2.9 10.6 2" fill="none" stroke="#404040" stroke-width="1.6" stroke-linecap="round"></path></svg>
<div class="a" style="left:203.25px;top:264px;width:3.5px;height:1px;background:#333"></div>
<div class="a" style="left:279.25px;top:264px;width:3.5px;height:1px;background:#333"></div>
<div class="a" style="left:368.25px;top:264px;width:3.5px;height:1px;background:#333"></div>
<div class="a" style="left:444.25px;top:264px;width:3.5px;height:1px;background:#333"></div>
<div class="t" style="left:473.30px;width:80px;text-align:center;top:259.10px;font-size:10px;font-weight:bold;color:#1f1f7a;transform:scaleX(1.055);transform-origin:50% 0">1.553,0</div>
<div class="t" style="left:544.20px;width:80px;text-align:center;top:259.10px;font-size:10px;font-weight:bold;color:#2b8a2b;transform:scaleX(1.05);transform-origin:50% 0">+47,5</div>
<div class="t" style="left:611.00px;width:80px;text-align:center;top:259.10px;font-size:10px;font-weight:bold;color:#2b8a2b;transform:scaleX(1.03);transform-origin:50% 0">3,16 %</div>
<div class="t" style="left:624.00px;width:120px;text-align:right;top:259.10px;font-size:10px;font-weight:normal;color:#222;transform:scaleX(1.075);transform-origin:100% 0">68.000</div>
<div class="t" style="left:692.30px;width:120px;text-align:right;top:259.10px;font-size:10px;font-weight:normal;color:#222;transform:scaleX(1.075);transform-origin:100% 0">68.000.000</div>
<div class="a" style="left:852.25px;top:264px;width:3.5px;height:1px;background:#333"></div>
<div class="t" style="left:894.50px;width:80px;text-align:center;top:259.10px;font-size:10px;font-weight:normal;color:#222;transform:scaleX(1.05);transform-origin:50% 0">1.505,5</div>
<div class="t" style="left:972.00px;width:80px;text-align:center;top:259.10px;font-size:10px;font-weight:normal;color:#222;transform:scaleX(1.05);transform-origin:50% 0">1.540,0</div>
<div class="t" style="left:1047.50px;width:80px;text-align:center;top:259.10px;font-size:10px;font-weight:normal;color:#222;transform:scaleX(1.05);transform-origin:50% 0">1.553,0</div>
<div class="t" style="left:1129.50px;width:120px;text-align:right;top:259.10px;font-size:10px;font-weight:normal;color:#222;transform:scaleX(1.05);transform-origin:100% 0">553.234</div>
<div class="t" style="left:1264.00px;top:259.10px;font-size:10px;font-weight:normal;color:#3a9a3a;transform:scaleX(1.09);transform-origin:0 0">3</div>
<div class="a" style="left:0;top:292.98px;width:138px;height:1.5px;background:#2c3d6e"></div>
<div class="a" style="left:175px;top:292.98px;width:1096px;height:1.5px;background:#c0bfc0"></div>
<div class="t" style="left:13px;top:279.34px;font-size:10.3px;font-weight:bold;color:#fff;transform:scaleX(0.93);transform-origin:0 0">DLR/DIC25</div>
<svg class="a" style="left:143.8px;top:277.94px" width="12" height="12" viewBox="0 0 24 24"><path d="M12 2.5l2.9 6.1 6.6.8-4.9 4.5 1.3 6.6L12 17.2l-5.9 3.3 1.3-6.6-4.9-4.5 6.6-.8z" fill="none" stroke="#4a4a4a" stroke-width="2.4" stroke-linejoin="round"></path></svg>
<svg class="a" style="left:159.5px;top:281.14px" width="12" height="7" viewBox="0 0 12 7"><path d="M1 5.8 C2.3 4.3 3.4 2.6 4.4 2.6 C5.5 2.6 6 4.9 7.1 4.9 C8.2 4.9 9.4 2.9 10.6 2" fill="none" stroke="#404040" stroke-width="1.6" stroke-linecap="round"></path></svg>
<div class="a" style="left:203.25px;top:284px;width:3.5px;height:1px;background:#333"></div>
<div class="a" style="left:279.25px;top:284px;width:3.5px;height:1px;background:#333"></div>
<div class="a" style="left:368.25px;top:284px;width:3.5px;height:1px;background:#333"></div>
<div class="a" style="left:444.25px;top:284px;width:3.5px;height:1px;background:#333"></div>
<div class="t" style="left:473.30px;width:80px;text-align:center;top:279.54px;font-size:10px;font-weight:bold;color:#1f1f7a;transform:scaleX(1.055);transform-origin:50% 0">1.593,0</div>
<div class="t" style="left:544.20px;width:80px;text-align:center;top:279.54px;font-size:10px;font-weight:bold;color:#2b8a2b;transform:scaleX(1.05);transform-origin:50% 0">+53,0</div>
<div class="t" style="left:611.00px;width:80px;text-align:center;top:279.54px;font-size:10px;font-weight:bold;color:#2b8a2b;transform:scaleX(1.03);transform-origin:50% 0">3,44 %</div>
<div class="t" style="left:624.00px;width:120px;text-align:right;top:279.54px;font-size:10px;font-weight:normal;color:#222;transform:scaleX(1.075);transform-origin:100% 0">2.419</div>
<div class="t" style="left:692.30px;width:120px;text-align:right;top:279.54px;font-size:10px;font-weight:normal;color:#222;transform:scaleX(1.075);transform-origin:100% 0">2.419.000</div>
<div class="a" style="left:852.25px;top:284px;width:3.5px;height:1px;background:#333"></div>
<div class="t" style="left:894.50px;width:80px;text-align:center;top:279.54px;font-size:10px;font-weight:normal;color:#222;transform:scaleX(1.05);transform-origin:50% 0">1.540,0</div>
<div class="t" style="left:972.00px;width:80px;text-align:center;top:279.54px;font-size:10px;font-weight:normal;color:#222;transform:scaleX(1.05);transform-origin:50% 0">1.582,0</div>
<div class="t" style="left:1047.50px;width:80px;text-align:center;top:279.54px;font-size:10px;font-weight:normal;color:#222;transform:scaleX(1.05);transform-origin:50% 0">1.610,5</div>
<div class="t" style="left:1129.50px;width:120px;text-align:right;top:279.54px;font-size:10px;font-weight:normal;color:#222;transform:scaleX(1.05);transform-origin:100% 0">1.369.379</div>
<div class="t" style="left:1264.00px;top:279.54px;font-size:10px;font-weight:normal;color:#3a9a3a;transform:scaleX(1.09);transform-origin:0 0">3</div>
<div class="a" style="left:0;top:313.42px;width:138px;height:1.5px;background:#2c3d6e"></div>
<div class="a" style="left:175px;top:313.42px;width:1096px;height:1.5px;background:#c0bfc0"></div>
<div class="t" style="left:13px;top:299.78px;font-size:10.3px;font-weight:bold;color:#fff;transform:scaleX(0.93);transform-origin:0 0">DLR/DIC25A</div>
<svg class="a" style="left:143.8px;top:298.38px" width="12" height="12" viewBox="0 0 24 24"><path d="M12 2.5l2.9 6.1 6.6.8-4.9 4.5 1.3 6.6L12 17.2l-5.9 3.3 1.3-6.6-4.9-4.5 6.6-.8z" fill="none" stroke="#4a4a4a" stroke-width="2.4" stroke-linejoin="round"></path></svg>
<svg class="a" style="left:159.5px;top:301.58px" width="12" height="7" viewBox="0 0 12 7"><path d="M1 5.8 C2.3 4.3 3.4 2.6 4.4 2.6 C5.5 2.6 6 4.9 7.1 4.9 C8.2 4.9 9.4 2.9 10.6 2" fill="none" stroke="#404040" stroke-width="1.6" stroke-linecap="round"></path></svg>
<div class="a" style="left:203.25px;top:304px;width:3.5px;height:1px;background:#333"></div>
<div class="a" style="left:279.25px;top:304px;width:3.5px;height:1px;background:#333"></div>
<div class="a" style="left:368.25px;top:304px;width:3.5px;height:1px;background:#333"></div>
<div class="a" style="left:444.25px;top:304px;width:3.5px;height:1px;background:#333"></div>
<div class="t" style="left:473.30px;width:80px;text-align:center;top:299.98px;font-size:10px;font-weight:bold;color:#1f1f7a;transform:scaleX(1.055);transform-origin:50% 0">1.580,0</div>
<div class="t" style="left:544.20px;width:80px;text-align:center;top:299.98px;font-size:10px;font-weight:bold;color:#2b8a2b;transform:scaleX(1.05);transform-origin:50% 0">+40,0</div>
<div class="t" style="left:611.00px;width:80px;text-align:center;top:299.98px;font-size:10px;font-weight:bold;color:#2b8a2b;transform:scaleX(1.03);transform-origin:50% 0">2,60 %</div>
<div class="t" style="left:624.00px;width:120px;text-align:right;top:299.98px;font-size:10px;font-weight:normal;color:#222;transform:scaleX(1.075);transform-origin:100% 0">2.500</div>
<div class="t" style="left:692.30px;width:120px;text-align:right;top:299.98px;font-size:10px;font-weight:normal;color:#222;transform:scaleX(1.075);transform-origin:100% 0">2.500.000</div>
<div class="a" style="left:852.25px;top:304px;width:3.5px;height:1px;background:#333"></div>
<div class="t" style="left:894.50px;width:80px;text-align:center;top:299.98px;font-size:10px;font-weight:normal;color:#222;transform:scaleX(1.05);transform-origin:50% 0">1.540,0</div>
<div class="t" style="left:972.00px;width:80px;text-align:center;top:299.98px;font-size:10px;font-weight:normal;color:#222;transform:scaleX(1.05);transform-origin:50% 0">1.580,0</div>
<div class="t" style="left:1047.50px;width:80px;text-align:center;top:299.98px;font-size:10px;font-weight:normal;color:#222;transform:scaleX(1.05);transform-origin:50% 0">1.590,0</div>
<div class="t" style="left:1129.50px;width:120px;text-align:right;top:299.98px;font-size:10px;font-weight:normal;color:#222;transform:scaleX(1.05);transform-origin:100% 0">1.369.379</div>
<div class="t" style="left:1264.00px;top:299.98px;font-size:10px;font-weight:normal;color:#3a9a3a;transform:scaleX(1.09);transform-origin:0 0">3</div>
<div class="a" style="left:0;top:333.86px;width:138px;height:1.5px;background:#2c3d6e"></div>
<div class="a" style="left:175px;top:333.86px;width:1096px;height:1.5px;background:#c0bfc0"></div>
<div class="t" style="left:13px;top:320.22px;font-size:10.3px;font-weight:bold;color:#fff;transform:scaleX(0.93);transform-origin:0 0">DLR/ENE26</div>
<svg class="a" style="left:143.8px;top:318.82px" width="12" height="12" viewBox="0 0 24 24"><path d="M12 2.5l2.9 6.1 6.6.8-4.9 4.5 1.3 6.6L12 17.2l-5.9 3.3 1.3-6.6-4.9-4.5 6.6-.8z" fill="none" stroke="#4a4a4a" stroke-width="2.4" stroke-linejoin="round"></path></svg>
<svg class="a" style="left:159.5px;top:322.02px" width="12" height="7" viewBox="0 0 12 7"><path d="M1 5.8 C2.3 4.3 3.4 2.6 4.4 2.6 C5.5 2.6 6 4.9 7.1 4.9 C8.2 4.9 9.4 2.9 10.6 2" fill="none" stroke="#404040" stroke-width="1.6" stroke-linecap="round"></path></svg>
<div class="a" style="left:203.25px;top:325px;width:3.5px;height:1px;background:#333"></div>
<div class="a" style="left:279.25px;top:325px;width:3.5px;height:1px;background:#333"></div>
<div class="a" style="left:368.25px;top:325px;width:3.5px;height:1px;background:#333"></div>
<div class="a" style="left:444.25px;top:325px;width:3.5px;height:1px;background:#333"></div>
<div class="t" style="left:473.30px;width:80px;text-align:center;top:320.42px;font-size:10px;font-weight:bold;color:#1f1f7a;transform:scaleX(1.055);transform-origin:50% 0">1.628,0</div>
<div class="t" style="left:544.20px;width:80px;text-align:center;top:320.42px;font-size:10px;font-weight:bold;color:#2b8a2b;transform:scaleX(1.05);transform-origin:50% 0">+52,0</div>
<div class="t" style="left:611.00px;width:80px;text-align:center;top:320.42px;font-size:10px;font-weight:bold;color:#2b8a2b;transform:scaleX(1.03);transform-origin:50% 0">3,30 %</div>
<div class="t" style="left:624.00px;width:120px;text-align:right;top:320.42px;font-size:10px;font-weight:normal;color:#222;transform:scaleX(1.075);transform-origin:100% 0">129</div>
<div class="t" style="left:692.30px;width:120px;text-align:right;top:320.42px;font-size:10px;font-weight:normal;color:#222;transform:scaleX(1.075);transform-origin:100% 0">129.000</div>
<div class="a" style="left:852.25px;top:325px;width:3.5px;height:1px;background:#333"></div>
<div class="t" style="left:894.50px;width:80px;text-align:center;top:320.42px;font-size:10px;font-weight:normal;color:#222;transform:scaleX(1.05);transform-origin:50% 0">1.576,0</div>
<div class="t" style="left:972.00px;width:80px;text-align:center;top:320.42px;font-size:10px;font-weight:normal;color:#222;transform:scaleX(1.05);transform-origin:50% 0">1.620,0</div>
<div class="t" style="left:1047.50px;width:80px;text-align:center;top:320.42px;font-size:10px;font-weight:normal;color:#222;transform:scaleX(1.05);transform-origin:50% 0">1.639,0</div>
<div class="t" style="left:1129.50px;width:120px;text-align:right;top:320.42px;font-size:10px;font-weight:normal;color:#222;transform:scaleX(1.05);transform-origin:100% 0">426.384</div>
<div class="t" style="left:1264.00px;top:320.42px;font-size:10px;font-weight:normal;color:#3a9a3a;transform:scaleX(1.09);transform-origin:0 0">3</div>
<div class="a" style="left:0;top:354.30px;width:138px;height:1.5px;background:#2c3d6e"></div>
<div class="a" style="left:175px;top:354.30px;width:1096px;height:1.5px;background:#c0bfc0"></div>
<div class="t" style="left:13px;top:340.66px;font-size:10.3px;font-weight:bold;color:#fff;transform:scaleX(0.93);transform-origin:0 0">DLR/ENE26A</div>
<svg class="a" style="left:143.8px;top:339.26px" width="12" height="12" viewBox="0 0 24 24"><path d="M12 2.5l2.9 6.1 6.6.8-4.9 4.5 1.3 6.6L12 17.2l-5.9 3.3 1.3-6.6-4.9-4.5 6.6-.8z" fill="none" stroke="#4a4a4a" stroke-width="2.4" stroke-linejoin="round"></path></svg>
<svg class="a" style="left:159.5px;top:342.46px" width="12" height="7" viewBox="0 0 12 7"><path d="M1 5.8 C2.3 4.3 3.4 2.6 4.4 2.6 C5.5 2.6 6 4.9 7.1 4.9 C8.2 4.9 9.4 2.9 10.6 2" fill="none" stroke="#404040" stroke-width="1.6" stroke-linecap="round"></path></svg>
<div class="a" style="left:203.25px;top:345px;width:3.5px;height:1px;background:#333"></div>
<div class="a" style="left:279.25px;top:345px;width:3.5px;height:1px;background:#333"></div>
<div class="a" style="left:368.25px;top:345px;width:3.5px;height:1px;background:#333"></div>
<div class="a" style="left:444.25px;top:345px;width:3.5px;height:1px;background:#333"></div>
<div class="t" style="left:473.30px;width:80px;text-align:center;top:340.86px;font-size:10px;font-weight:bold;color:#1f1f7a;transform:scaleX(1.055);transform-origin:50% 0">1.630,0</div>
<div class="t" style="left:544.20px;width:80px;text-align:center;top:340.86px;font-size:10px;font-weight:bold;color:#2b8a2b;transform:scaleX(1.05);transform-origin:50% 0">+54,0</div>
<div class="t" style="left:611.00px;width:80px;text-align:center;top:340.86px;font-size:10px;font-weight:bold;color:#2b8a2b;transform:scaleX(1.03);transform-origin:50% 0">3,43 %</div>
<div class="t" style="left:624.00px;width:120px;text-align:right;top:340.86px;font-size:10px;font-weight:normal;color:#222;transform:scaleX(1.075);transform-origin:100% 0">1.000</div>
<div class="t" style="left:692.30px;width:120px;text-align:right;top:340.86px;font-size:10px;font-weight:normal;color:#222;transform:scaleX(1.075);transform-origin:100% 0">1.000.000</div>
<div class="a" style="left:852.25px;top:345px;width:3.5px;height:1px;background:#333"></div>
<div class="t" style="left:894.50px;width:80px;text-align:center;top:340.86px;font-size:10px;font-weight:normal;color:#222;transform:scaleX(1.05);transform-origin:50% 0">1.576,0</div>
<div class="t" style="left:972.00px;width:80px;text-align:center;top:340.86px;font-size:10px;font-weight:normal;color:#222;transform:scaleX(1.05);transform-origin:50% 0">1.630,0</div>
<div class="t" style="left:1047.50px;width:80px;text-align:center;top:340.86px;font-size:10px;font-weight:normal;color:#222;transform:scaleX(1.05);transform-origin:50% 0">1.630,0</div>
<div class="t" style="left:1129.50px;width:120px;text-align:right;top:340.86px;font-size:10px;font-weight:normal;color:#222;transform:scaleX(1.05);transform-origin:100% 0">426.384</div>
<div class="t" style="left:1264.00px;top:340.86px;font-size:10px;font-weight:normal;color:#3a9a3a;transform:scaleX(1.09);transform-origin:0 0">3</div>
<div class="a" style="left:0;top:374.74px;width:138px;height:1.5px;background:#2c3d6e"></div>
<div class="a" style="left:175px;top:374.74px;width:1096px;height:1.5px;background:#c0bfc0"></div>
<div class="t" style="left:13px;top:361.10px;font-size:10.3px;font-weight:bold;color:#fff;transform:scaleX(0.93);transform-origin:0 0">DLR/FEB26</div>
<svg class="a" style="left:143.8px;top:359.70px" width="12" height="12" viewBox="0 0 24 24"><path d="M12 2.5l2.9 6.1 6.6.8-4.9 4.5 1.3 6.6L12 17.2l-5.9 3.3 1.3-6.6-4.9-4.5 6.6-.8z" fill="none" stroke="#4a4a4a" stroke-width="2.4" stroke-linejoin="round"></path></svg>
<svg class="a" style="left:159.5px;top:362.90px" width="12" height="7" viewBox="0 0 12 7"><path d="M1 5.8 C2.3 4.3 3.4 2.6 4.4 2.6 C5.5 2.6 6 4.9 7.1 4.9 C8.2 4.9 9.4 2.9 10.6 2" fill="none" stroke="#404040" stroke-width="1.6" stroke-linecap="round"></path></svg>
<div class="a" style="left:203.25px;top:366px;width:3.5px;height:1px;background:#333"></div>
<div class="a" style="left:279.25px;top:366px;width:3.5px;height:1px;background:#333"></div>
<div class="a" style="left:368.25px;top:366px;width:3.5px;height:1px;background:#333"></div>
<div class="a" style="left:444.25px;top:366px;width:3.5px;height:1px;background:#333"></div>
<div class="t" style="left:473.30px;width:80px;text-align:center;top:361.30px;font-size:10px;font-weight:bold;color:#1f1f7a;transform:scaleX(1.055);transform-origin:50% 0">1.660,0</div>
<div class="t" style="left:544.20px;width:80px;text-align:center;top:361.30px;font-size:10px;font-weight:bold;color:#2b8a2b;transform:scaleX(1.05);transform-origin:50% 0">+55,5</div>
<div class="t" style="left:611.00px;width:80px;text-align:center;top:361.30px;font-size:10px;font-weight:bold;color:#2b8a2b;transform:scaleX(1.03);transform-origin:50% 0">3,46 %</div>
<div class="t" style="left:624.00px;width:120px;text-align:right;top:361.30px;font-size:10px;font-weight:normal;color:#222;transform:scaleX(1.075);transform-origin:100% 0">180</div>
<div class="t" style="left:692.30px;width:120px;text-align:right;top:361.30px;font-size:10px;font-weight:normal;color:#222;transform:scaleX(1.075);transform-origin:100% 0">180.000</div>
<div class="a" style="left:852.25px;top:366px;width:3.5px;height:1px;background:#333"></div>
<div class="t" style="left:894.50px;width:80px;text-align:center;top:361.30px;font-size:10px;font-weight:normal;color:#222;transform:scaleX(1.05);transform-origin:50% 0">1.604,5</div>
<div class="t" style="left:972.00px;width:80px;text-align:center;top:361.30px;font-size:10px;font-weight:normal;color:#222;transform:scaleX(1.05);transform-origin:50% 0">1.635,0</div>
<div class="t" style="left:1047.50px;width:80px;text-align:center;top:361.30px;font-size:10px;font-weight:normal;color:#222;transform:scaleX(1.05);transform-origin:50% 0">1.660,0</div>
<div class="t" style="left:1129.50px;width:120px;text-align:right;top:361.30px;font-size:10px;font-weight:normal;color:#222;transform:scaleX(1.05);transform-origin:100% 0">161.484</div>
<div class="t" style="left:1264.00px;top:361.30px;font-size:10px;font-weight:normal;color:#3a9a3a;transform:scaleX(1.09);transform-origin:0 0">3</div>
<div class="a" style="left:0;top:395.18px;width:138px;height:1.5px;background:#2c3d6e"></div>
<div class="a" style="left:175px;top:395.18px;width:1096px;height:1.5px;background:#c0bfc0"></div>
<div class="t" style="left:13px;top:381.54px;font-size:10.3px;font-weight:bold;color:#fff;transform:scaleX(0.93);transform-origin:0 0">DLR/FEB26A</div>
<svg class="a" style="left:143.8px;top:380.14px" width="12" height="12" viewBox="0 0 24 24"><path d="M12 2.5l2.9 6.1 6.6.8-4.9 4.5 1.3 6.6L12 17.2l-5.9 3.3 1.3-6.6-4.9-4.5 6.6-.8z" fill="none" stroke="#4a4a4a" stroke-width="2.4" stroke-linejoin="round"></path></svg>
<svg class="a" style="left:159.5px;top:383.34px" width="12" height="7" viewBox="0 0 12 7"><path d="M1 5.8 C2.3 4.3 3.4 2.6 4.4 2.6 C5.5 2.6 6 4.9 7.1 4.9 C8.2 4.9 9.4 2.9 10.6 2" fill="none" stroke="#404040" stroke-width="1.6" stroke-linecap="round"></path></svg>
<div class="a" style="left:203.25px;top:386px;width:3.5px;height:1px;background:#333"></div>
<div class="a" style="left:279.25px;top:386px;width:3.5px;height:1px;background:#333"></div>
<div class="a" style="left:368.25px;top:386px;width:3.5px;height:1px;background:#333"></div>
<div class="a" style="left:444.25px;top:386px;width:3.5px;height:1px;background:#333"></div>
<div class="t" style="left:473.30px;width:80px;text-align:center;top:381.74px;font-size:10px;font-weight:bold;color:#1f1f7a;transform:scaleX(1.055);transform-origin:50% 0">1.665,0</div>
<div class="t" style="left:544.20px;width:80px;text-align:center;top:381.74px;font-size:10px;font-weight:bold;color:#2b8a2b;transform:scaleX(1.05);transform-origin:50% 0">+60,5</div>
<div class="t" style="left:611.00px;width:80px;text-align:center;top:381.74px;font-size:10px;font-weight:bold;color:#2b8a2b;transform:scaleX(1.03);transform-origin:50% 0">3,77 %</div>
<div class="t" style="left:624.00px;width:120px;text-align:right;top:381.74px;font-size:10px;font-weight:normal;color:#222;transform:scaleX(1.075);transform-origin:100% 0">3.500</div>
<div class="t" style="left:692.30px;width:120px;text-align:right;top:381.74px;font-size:10px;font-weight:normal;color:#222;transform:scaleX(1.075);transform-origin:100% 0">3.500.000</div>
<div class="a" style="left:852.25px;top:386px;width:3.5px;height:1px;background:#333"></div>
<div class="t" style="left:894.50px;width:80px;text-align:center;top:381.74px;font-size:10px;font-weight:normal;color:#222;transform:scaleX(1.05);transform-origin:50% 0">1.604,5</div>
<div class="t" style="left:972.00px;width:80px;text-align:center;top:381.74px;font-size:10px;font-weight:normal;color:#222;transform:scaleX(1.05);transform-origin:50% 0">1.665,0</div>
<div class="t" style="left:1047.50px;width:80px;text-align:center;top:381.74px;font-size:10px;font-weight:normal;color:#222;transform:scaleX(1.05);transform-origin:50% 0">1.665,0</div>
<div class="t" style="left:1129.50px;width:120px;text-align:right;top:381.74px;font-size:10px;font-weight:normal;color:#222;transform:scaleX(1.05);transform-origin:100% 0">161.484</div>
<div class="t" style="left:1264.00px;top:381.74px;font-size:10px;font-weight:normal;color:#3a9a3a;transform:scaleX(1.09);transform-origin:0 0">3</div>
<div class="a" style="left:0;top:415.62px;width:138px;height:1.5px;background:#2c3d6e"></div>
<div class="a" style="left:175px;top:415.62px;width:1096px;height:1.5px;background:#c0bfc0"></div>
<div class="t" style="left:13px;top:401.98px;font-size:10.3px;font-weight:bold;color:#fff;transform:scaleX(0.93);transform-origin:0 0">DLR/MAR26</div>
<svg class="a" style="left:143.8px;top:400.58px" width="12" height="12" viewBox="0 0 24 24"><path d="M12 2.5l2.9 6.1 6.6.8-4.9 4.5 1.3 6.6L12 17.2l-5.9 3.3 1.3-6.6-4.9-4.5 6.6-.8z" fill="none" stroke="#4a4a4a" stroke-width="2.4" stroke-linejoin="round"></path></svg>
<svg class="a" style="left:159.5px;top:403.78px" width="12" height="7" viewBox="0 0 12 7"><path d="M1 5.8 C2.3 4.3 3.4 2.6 4.4 2.6 C5.5 2.6 6 4.9 7.1 4.9 C8.2 4.9 9.4 2.9 10.6 2" fill="none" stroke="#404040" stroke-width="1.6" stroke-linecap="round"></path></svg>
<div class="a" style="left:203.25px;top:407px;width:3.5px;height:1px;background:#333"></div>
<div class="a" style="left:279.25px;top:407px;width:3.5px;height:1px;background:#333"></div>
<div class="a" style="left:368.25px;top:407px;width:3.5px;height:1px;background:#333"></div>
<div class="a" style="left:444.25px;top:407px;width:3.5px;height:1px;background:#333"></div>
<div class="t" style="left:473.30px;width:80px;text-align:center;top:402.18px;font-size:10px;font-weight:bold;color:#1f1f7a;transform:scaleX(1.055);transform-origin:50% 0">1.689,5</div>
<div class="t" style="left:544.20px;width:80px;text-align:center;top:402.18px;font-size:10px;font-weight:bold;color:#2b8a2b;transform:scaleX(1.05);transform-origin:50% 0">+57,0</div>
<div class="t" style="left:611.00px;width:80px;text-align:center;top:402.18px;font-size:10px;font-weight:bold;color:#2b8a2b;transform:scaleX(1.03);transform-origin:50% 0">3,49 %</div>
<div class="t" style="left:624.00px;width:120px;text-align:right;top:402.18px;font-size:10px;font-weight:normal;color:#222;transform:scaleX(1.075);transform-origin:100% 0">275</div>
<div class="t" style="left:692.30px;width:120px;text-align:right;top:402.18px;font-size:10px;font-weight:normal;color:#222;transform:scaleX(1.075);transform-origin:100% 0">275.000</div>
<div class="a" style="left:852.25px;top:407px;width:3.5px;height:1px;background:#333"></div>
<div class="t" style="left:894.50px;width:80px;text-align:center;top:402.18px;font-size:10px;font-weight:normal;color:#222;transform:scaleX(1.05);transform-origin:50% 0">1.632,5</div>
<div class="t" style="left:972.00px;width:80px;text-align:center;top:402.18px;font-size:10px;font-weight:normal;color:#222;transform:scaleX(1.05);transform-origin:50% 0">1.640,0</div>
<div class="t" style="left:1047.50px;width:80px;text-align:center;top:402.18px;font-size:10px;font-weight:normal;color:#222;transform:scaleX(1.05);transform-origin:50% 0">1.691,5</div>
<div class="t" style="left:1129.50px;width:120px;text-align:right;top:402.18px;font-size:10px;font-weight:normal;color:#222;transform:scaleX(1.05);transform-origin:100% 0">339.339</div>
<div class="t" style="left:1264.00px;top:402.18px;font-size:10px;font-weight:normal;color:#3a9a3a;transform:scaleX(1.09);transform-origin:0 0">3</div>
<div class="a" style="left:0;top:436.06px;width:138px;height:1.5px;background:#2c3d6e"></div>
<div class="a" style="left:175px;top:436.06px;width:1096px;height:1.5px;background:#c0bfc0"></div>
<div class="t" style="left:13px;top:422.42px;font-size:10.3px;font-weight:bold;color:#fff;transform:scaleX(0.93);transform-origin:0 0">DLR/MAR26A</div>
<svg class="a" style="left:143.8px;top:421.02px" width="12" height="12" viewBox="0 0 24 24"><path d="M12 2.5l2.9 6.1 6.6.8-4.9 4.5 1.3 6.6L12 17.2l-5.9 3.3 1.3-6.6-4.9-4.5 6.6-.8z" fill="none" stroke="#4a4a4a" stroke-width="2.4" stroke-linejoin="round"></path></svg>
<svg class="a" style="left:159.5px;top:424.22px" width="12" height="7" viewBox="0 0 12 7"><path d="M1 5.8 C2.3 4.3 3.4 2.6 4.4 2.6 C5.5 2.6 6 4.9 7.1 4.9 C8.2 4.9 9.4 2.9 10.6 2" fill="none" stroke="#404040" stroke-width="1.6" stroke-linecap="round"></path></svg>
<div class="a" style="left:203.25px;top:427px;width:3.5px;height:1px;background:#333"></div>
<div class="a" style="left:279.25px;top:427px;width:3.5px;height:1px;background:#333"></div>
<div class="a" style="left:368.25px;top:427px;width:3.5px;height:1px;background:#333"></div>
<div class="a" style="left:444.25px;top:427px;width:3.5px;height:1px;background:#333"></div>
<div class="a" style="left:511.55px;top:427px;width:3.5px;height:1px;background:#333"></div>
<div class="a" style="left:582.45px;top:427px;width:3.5px;height:1px;background:#333"></div>
<div class="a" style="left:649.25px;top:427px;width:3.5px;height:1px;background:#333"></div>
<div class="a" style="left:740.75px;top:427px;width:3.5px;height:1px;background:#333"></div>
<div class="a" style="left:809.25px;top:427px;width:3.5px;height:1px;background:#333"></div>
<div class="a" style="left:852.25px;top:427px;width:3.5px;height:1px;background:#333"></div>
<div class="t" style="left:894.50px;width:80px;text-align:center;top:422.62px;font-size:10px;font-weight:normal;color:#222;transform:scaleX(1.05);transform-origin:50% 0">1.632,5</div>
<div class="a" style="left:1010.25px;top:427px;width:3.5px;height:1px;background:#333"></div>
<div class="a" style="left:1085.75px;top:427px;width:3.5px;height:1px;background:#333"></div>
<div class="t" style="left:1129.50px;width:120px;text-align:right;top:422.62px;font-size:10px;font-weight:normal;color:#222;transform:scaleX(1.05);transform-origin:100% 0">339.339</div>
<div class="a" style="left:0;top:456.50px;width:138px;height:1.5px;background:#2c3d6e"></div>
<div class="a" style="left:175px;top:456.50px;width:1096px;height:1.5px;background:#c0bfc0"></div>
<div class="t" style="left:13px;top:442.86px;font-size:10.3px;font-weight:bold;color:#fff;transform:scaleX(0.93);transform-origin:0 0">DLR/ABR26</div>
<svg class="a" style="left:143.8px;top:441.46px" width="12" height="12" viewBox="0 0 24 24"><path d="M12 2.5l2.9 6.1 6.6.8-4.9 4.5 1.3 6.6L12 17.2l-5.9 3.3 1.3-6.6-4.9-4.5 6.6-.8z" fill="none" stroke="#4a4a4a" stroke-width="2.4" stroke-linejoin="round"></path></svg>
<svg class="a" style="left:159.5px;top:444.66px" width="12" height="7" viewBox="0 0 12 7"><path d="M1 5.8 C2.3 4.3 3.4 2.6 4.4 2.6 C5.5 2.6 6 4.9 7.1 4.9 C8.2 4.9 9.4 2.9 10.6 2" fill="none" stroke="#404040" stroke-width="1.6" stroke-linecap="round"></path></svg>
<div class="a" style="left:203.25px;top:448px;width:3.5px;height:1px;background:#333"></div>
<div class="a" style="left:279.25px;top:448px;width:3.5px;height:1px;background:#333"></div>
<div class="a" style="left:368.25px;top:448px;width:3.5px;height:1px;background:#333"></div>
<div class="a" style="left:444.25px;top:448px;width:3.5px;height:1px;background:#333"></div>
<div class="t" style="left:473.30px;width:80px;text-align:center;top:443.06px;font-size:10px;font-weight:bold;color:#1f1f7a;transform:scaleX(1.055);transform-origin:50% 0">1.719,5</div>
<div class="t" style="left:544.20px;width:80px;text-align:center;top:443.06px;font-size:10px;font-weight:bold;color:#2b8a2b;transform:scaleX(1.05);transform-origin:50% 0">+54,5</div>
<div class="t" style="left:611.00px;width:80px;text-align:center;top:443.06px;font-size:10px;font-weight:bold;color:#2b8a2b;transform:scaleX(1.03);transform-origin:50% 0">3,27 %</div>
<div class="t" style="left:624.00px;width:120px;text-align:right;top:443.06px;font-size:10px;font-weight:normal;color:#222;transform:scaleX(1.075);transform-origin:100% 0">62</div>
<div class="t" style="left:692.30px;width:120px;text-align:right;top:443.06px;font-size:10px;font-weight:normal;color:#222;transform:scaleX(1.075);transform-origin:100% 0">62.000</div>
<div class="a" style="left:852.25px;top:448px;width:3.5px;height:1px;background:#333"></div>
<div class="t" style="left:894.50px;width:80px;text-align:center;top:443.06px;font-size:10px;font-weight:normal;color:#222;transform:scaleX(1.05);transform-origin:50% 0">1.665,0</div>
<div class="t" style="left:972.00px;width:80px;text-align:center;top:443.06px;font-size:10px;font-weight:normal;color:#222;transform:scaleX(1.05);transform-origin:50% 0">1.700,0</div>
<div class="t" style="left:1047.50px;width:80px;text-align:center;top:443.06px;font-size:10px;font-weight:normal;color:#222;transform:scaleX(1.05);transform-origin:50% 0">1.720,5</div>
<div class="t" style="left:1129.50px;width:120px;text-align:right;top:443.06px;font-size:10px;font-weight:normal;color:#222;transform:scaleX(1.05);transform-origin:100% 0">387.388</div>
<div class="t" style="left:1264.00px;top:443.06px;font-size:10px;font-weight:normal;color:#3a9a3a;transform:scaleX(1.09);transform-origin:0 0">3</div>
<div class="a" style="left:0;top:476.94px;width:138px;height:1.5px;background:#2c3d6e"></div>
<div class="a" style="left:175px;top:476.94px;width:1096px;height:1.5px;background:#c0bfc0"></div>
<div class="t" style="left:13px;top:463.30px;font-size:10.3px;font-weight:bold;color:#fff;transform:scaleX(0.93);transform-origin:0 0">DLR/ABR26A</div>
<svg class="a" style="left:143.8px;top:461.90px" width="12" height="12" viewBox="0 0 24 24"><path d="M12 2.5l2.9 6.1 6.6.8-4.9 4.5 1.3 6.6L12 17.2l-5.9 3.3 1.3-6.6-4.9-4.5 6.6-.8z" fill="none" stroke="#4a4a4a" stroke-width="2.4" stroke-linejoin="round"></path></svg>
<svg class="a" style="left:159.5px;top:465.10px" width="12" height="7" viewBox="0 0 12 7"><path d="M1 5.8 C2.3 4.3 3.4 2.6 4.4 2.6 C5.5 2.6 6 4.9 7.1 4.9 C8.2 4.9 9.4 2.9 10.6 2" fill="none" stroke="#404040" stroke-width="1.6" stroke-linecap="round"></path></svg>
<div class="a" style="left:203.25px;top:468px;width:3.5px;height:1px;background:#333"></div>
<div class="a" style="left:279.25px;top:468px;width:3.5px;height:1px;background:#333"></div>
<div class="a" style="left:368.25px;top:468px;width:3.5px;height:1px;background:#333"></div>
<div class="a" style="left:444.25px;top:468px;width:3.5px;height:1px;background:#333"></div>
<div class="t" style="left:473.30px;width:80px;text-align:center;top:463.50px;font-size:10px;font-weight:bold;color:#1f1f7a;transform:scaleX(1.055);transform-origin:50% 0">1.700,0</div>
<div class="t" style="left:544.20px;width:80px;text-align:center;top:463.50px;font-size:10px;font-weight:bold;color:#2b8a2b;transform:scaleX(1.05);transform-origin:50% 0">+35,0</div>
<div class="t" style="left:611.00px;width:80px;text-align:center;top:463.50px;font-size:10px;font-weight:bold;color:#2b8a2b;transform:scaleX(1.03);transform-origin:50% 0">2,10 %</div>
<div class="t" style="left:624.00px;width:120px;text-align:right;top:463.50px;font-size:10px;font-weight:normal;color:#222;transform:scaleX(1.075);transform-origin:100% 0">5.000</div>
<div class="t" style="left:692.30px;width:120px;text-align:right;top:463.50px;font-size:10px;font-weight:normal;color:#222;transform:scaleX(1.075);transform-origin:100% 0">5.000.000</div>
<div class="a" style="left:852.25px;top:468px;width:3.5px;height:1px;background:#333"></div>
<div class="t" style="left:894.50px;width:80px;text-align:center;top:463.50px;font-size:10px;font-weight:normal;color:#222;transform:scaleX(1.05);transform-origin:50% 0">1.665,0</div>
<div class="t" style="left:972.00px;width:80px;text-align:center;top:463.50px;font-size:10px;font-weight:normal;color:#222;transform:scaleX(1.05);transform-origin:50% 0">1.700,0</div>
<div class="t" style="left:1047.50px;width:80px;text-align:center;top:463.50px;font-size:10px;font-weight:normal;color:#222;transform:scaleX(1.05);transform-origin:50% 0">1.700,0</div>
<div class="t" style="left:1129.50px;width:120px;text-align:right;top:463.50px;font-size:10px;font-weight:normal;color:#222;transform:scaleX(1.05);transform-origin:100% 0">387.388</div>
<div class="t" style="left:1264.00px;top:463.50px;font-size:10px;font-weight:normal;color:#3a9a3a;transform:scaleX(1.09);transform-origin:0 0">2</div>
<div class="a" style="left:0;top:497.38px;width:138px;height:1.5px;background:#2c3d6e"></div>
<div class="a" style="left:175px;top:497.38px;width:1096px;height:1.5px;background:#c0bfc0"></div>
<div class="t" style="left:13px;top:483.74px;font-size:10.3px;font-weight:bold;color:#fff;transform:scaleX(0.93);transform-origin:0 0">DLR/MAY26</div>
<svg class="a" style="left:143.8px;top:482.34px" width="12" height="12" viewBox="0 0 24 24"><path d="M12 2.5l2.9 6.1 6.6.8-4.9 4.5 1.3 6.6L12 17.2l-5.9 3.3 1.3-6.6-4.9-4.5 6.6-.8z" fill="none" stroke="#4a4a4a" stroke-width="2.4" stroke-linejoin="round"></path></svg>
<svg class="a" style="left:159.5px;top:485.54px" width="12" height="7" viewBox="0 0 12 7"><path d="M1 5.8 C2.3 4.3 3.4 2.6 4.4 2.6 C5.5 2.6 6 4.9 7.1 4.9 C8.2 4.9 9.4 2.9 10.6 2" fill="none" stroke="#404040" stroke-width="1.6" stroke-linecap="round"></path></svg>
<div class="a" style="left:203.25px;top:488px;width:3.5px;height:1px;background:#333"></div>
<div class="a" style="left:279.25px;top:488px;width:3.5px;height:1px;background:#333"></div>
<div class="a" style="left:368.25px;top:488px;width:3.5px;height:1px;background:#333"></div>
<div class="a" style="left:444.25px;top:488px;width:3.5px;height:1px;background:#333"></div>
<div class="t" style="left:473.30px;width:80px;text-align:center;top:483.94px;font-size:10px;font-weight:bold;color:#1f1f7a;transform:scaleX(1.055);transform-origin:50% 0">1.750,0</div>
<div class="t" style="left:544.20px;width:80px;text-align:center;top:483.94px;font-size:10px;font-weight:bold;color:#2b8a2b;transform:scaleX(1.05);transform-origin:50% 0">+57,0</div>
<div class="t" style="left:611.00px;width:80px;text-align:center;top:483.94px;font-size:10px;font-weight:bold;color:#2b8a2b;transform:scaleX(1.03);transform-origin:50% 0">3,37 %</div>
<div class="t" style="left:624.00px;width:120px;text-align:right;top:483.94px;font-size:10px;font-weight:normal;color:#222;transform:scaleX(1.075);transform-origin:100% 0">7.678</div>
<div class="t" style="left:692.30px;width:120px;text-align:right;top:483.94px;font-size:10px;font-weight:normal;color:#222;transform:scaleX(1.075);transform-origin:100% 0">7.678.000</div>
<div class="a" style="left:852.25px;top:488px;width:3.5px;height:1px;background:#333"></div>
<div class="t" style="left:894.50px;width:80px;text-align:center;top:483.94px;font-size:10px;font-weight:normal;color:#222;transform:scaleX(1.05);transform-origin:50% 0">1.693,0</div>
<div class="t" style="left:972.00px;width:80px;text-align:center;top:483.94px;font-size:10px;font-weight:normal;color:#222;transform:scaleX(1.05);transform-origin:50% 0">1.731,5</div>
<div class="t" style="left:1047.50px;width:80px;text-align:center;top:483.94px;font-size:10px;font-weight:normal;color:#222;transform:scaleX(1.05);transform-origin:50% 0">1.769,5</div>
<div class="t" style="left:1129.50px;width:120px;text-align:right;top:483.94px;font-size:10px;font-weight:normal;color:#222;transform:scaleX(1.05);transform-origin:100% 0">1.427.831</div>
<div class="t" style="left:1264.00px;top:483.94px;font-size:10px;font-weight:normal;color:#3a9a3a;transform:scaleX(1.09);transform-origin:0 0">3</div>
<div class="a" style="left:0;top:517.82px;width:138px;height:1.5px;background:#2c3d6e"></div>
<div class="a" style="left:175px;top:517.82px;width:1096px;height:1.5px;background:#c0bfc0"></div>
<div class="t" style="left:13px;top:504.18px;font-size:10.3px;font-weight:bold;color:#fff;transform:scaleX(0.93);transform-origin:0 0">DLR/MAY26A</div>
<svg class="a" style="left:143.8px;top:502.78px" width="12" height="12" viewBox="0 0 24 24"><path d="M12 2.5l2.9 6.1 6.6.8-4.9 4.5 1.3 6.6L12 17.2l-5.9 3.3 1.3-6.6-4.9-4.5 6.6-.8z" fill="none" stroke="#4a4a4a" stroke-width="2.4" stroke-linejoin="round"></path></svg>
<svg class="a" style="left:159.5px;top:505.98px" width="12" height="7" viewBox="0 0 12 7"><path d="M1 5.8 C2.3 4.3 3.4 2.6 4.4 2.6 C5.5 2.6 6 4.9 7.1 4.9 C8.2 4.9 9.4 2.9 10.6 2" fill="none" stroke="#404040" stroke-width="1.6" stroke-linecap="round"></path></svg>
<div class="a" style="left:203.25px;top:509px;width:3.5px;height:1px;background:#333"></div>
<div class="a" style="left:279.25px;top:509px;width:3.5px;height:1px;background:#333"></div>
<div class="a" style="left:368.25px;top:509px;width:3.5px;height:1px;background:#333"></div>
<div class="a" style="left:444.25px;top:509px;width:3.5px;height:1px;background:#333"></div>
<div class="t" style="left:473.30px;width:80px;text-align:center;top:504.38px;font-size:10px;font-weight:bold;color:#1f1f7a;transform:scaleX(1.055);transform-origin:50% 0">1.750,0</div>
<div class="t" style="left:544.20px;width:80px;text-align:center;top:504.38px;font-size:10px;font-weight:bold;color:#2b8a2b;transform:scaleX(1.05);transform-origin:50% 0">+57,0</div>
<div class="t" style="left:611.00px;width:80px;text-align:center;top:504.38px;font-size:10px;font-weight:bold;color:#2b8a2b;transform:scaleX(1.03);transform-origin:50% 0">3,37 %</div>
<div class="t" style="left:624.00px;width:120px;text-align:right;top:504.38px;font-size:10px;font-weight:normal;color:#222;transform:scaleX(1.075);transform-origin:100% 0">16.000</div>
<div class="t" style="left:692.30px;width:120px;text-align:right;top:504.38px;font-size:10px;font-weight:normal;color:#222;transform:scaleX(1.075);transform-origin:100% 0">16.000.000</div>
<div class="a" style="left:852.25px;top:509px;width:3.5px;height:1px;background:#333"></div>
<div class="t" style="left:894.50px;width:80px;text-align:center;top:504.38px;font-size:10px;font-weight:normal;color:#222;transform:scaleX(1.05);transform-origin:50% 0">1.693,0</div>
<div class="t" style="left:972.00px;width:80px;text-align:center;top:504.38px;font-size:10px;font-weight:normal;color:#222;transform:scaleX(1.05);transform-origin:50% 0">1.745,0</div>
<div class="t" style="left:1047.50px;width:80px;text-align:center;top:504.38px;font-size:10px;font-weight:normal;color:#222;transform:scaleX(1.05);transform-origin:50% 0">1.765,0</div>
<div class="t" style="left:1129.50px;width:120px;text-align:right;top:504.38px;font-size:10px;font-weight:normal;color:#222;transform:scaleX(1.05);transform-origin:100% 0">1.427.831</div>
<div class="t" style="left:1264.00px;top:504.38px;font-size:10px;font-weight:normal;color:#3a9a3a;transform:scaleX(1.09);transform-origin:0 0">3</div>
<div class="a" style="left:0;top:538.26px;width:138px;height:1.5px;background:#2c3d6e"></div>
<div class="a" style="left:175px;top:538.26px;width:1096px;height:1.5px;background:#c0bfc0"></div>
<div class="t" style="left:13px;top:524.62px;font-size:10.3px;font-weight:bold;color:#fff;transform:scaleX(0.93);transform-origin:0 0">DLR/JUN26</div>
<svg class="a" style="left:143.8px;top:523.22px" width="12" height="12" viewBox="0 0 24 24"><path d="M12 2.5l2.9 6.1 6.6.8-4.9 4.5 1.3 6.6L12 17.2l-5.9 3.3 1.3-6.6-4.9-4.5 6.6-.8z" fill="none" stroke="#4a4a4a" stroke-width="2.4" stroke-linejoin="round"></path></svg>
<svg class="a" style="left:159.5px;top:526.42px" width="12" height="7" viewBox="0 0 12 7"><path d="M1 5.8 C2.3 4.3 3.4 2.6 4.4 2.6 C5.5 2.6 6 4.9 7.1 4.9 C8.2 4.9 9.4 2.9 10.6 2" fill="none" stroke="#404040" stroke-width="1.6" stroke-linecap="round"></path></svg>
<div class="a" style="left:203.25px;top:529px;width:3.5px;height:1px;background:#333"></div>
<div class="a" style="left:279.25px;top:529px;width:3.5px;height:1px;background:#333"></div>
<div class="a" style="left:368.25px;top:529px;width:3.5px;height:1px;background:#333"></div>
<div class="a" style="left:444.25px;top:529px;width:3.5px;height:1px;background:#333"></div>
<div class="t" style="left:473.30px;width:80px;text-align:center;top:524.82px;font-size:10px;font-weight:bold;color:#1f1f7a;transform:scaleX(1.055);transform-origin:50% 0">1.792,5</div>
<div class="t" style="left:544.20px;width:80px;text-align:center;top:524.82px;font-size:10px;font-weight:bold;color:#2b8a2b;transform:scaleX(1.05);transform-origin:50% 0">+63,5</div>
<div class="t" style="left:611.00px;width:80px;text-align:center;top:524.82px;font-size:10px;font-weight:bold;color:#2b8a2b;transform:scaleX(1.03);transform-origin:50% 0">3,67 %</div>
<div class="t" style="left:624.00px;width:120px;text-align:right;top:524.82px;font-size:10px;font-weight:normal;color:#222;transform:scaleX(1.075);transform-origin:100% 0">27</div>
<div class="t" style="left:692.30px;width:120px;text-align:right;top:524.82px;font-size:10px;font-weight:normal;color:#222;transform:scaleX(1.075);transform-origin:100% 0">27.000</div>
<div class="a" style="left:852.25px;top:529px;width:3.5px;height:1px;background:#333"></div>
<div class="t" style="left:894.50px;width:80px;text-align:center;top:524.82px;font-size:10px;font-weight:normal;color:#222;transform:scaleX(1.05);transform-origin:50% 0">1.729,0</div>
<div class="t" style="left:972.00px;width:80px;text-align:center;top:524.82px;font-size:10px;font-weight:normal;color:#222;transform:scaleX(1.05);transform-origin:50% 0">1.765,0</div>
<div class="t" style="left:1047.50px;width:80px;text-align:center;top:524.82px;font-size:10px;font-weight:normal;color:#222;transform:scaleX(1.05);transform-origin:50% 0">1.799,5</div>
<div class="t" style="left:1129.50px;width:120px;text-align:right;top:524.82px;font-size:10px;font-weight:normal;color:#222;transform:scaleX(1.05);transform-origin:100% 0">21.772</div>
<div class="t" style="left:1264.00px;top:524.82px;font-size:10px;font-weight:normal;color:#3a9a3a;transform:scaleX(1.09);transform-origin:0 0">3</div>
<div class="a" style="left:0;top:558.70px;width:138px;height:1.5px;background:#2c3d6e"></div>
<div class="a" style="left:175px;top:558.70px;width:1096px;height:1.5px;background:#c0bfc0"></div>
<div class="t" style="left:13px;top:545.06px;font-size:10.3px;font-weight:bold;color:#fff;transform:scaleX(0.93);transform-origin:0 0">DLR/JUN26A</div>
<svg class="a" style="left:143.8px;top:543.66px" width="12" height="12" viewBox="0 0 24 24"><path d="M12 2.5l2.9 6.1 6.6.8-4.9 4.5 1.3 6.6L12 17.2l-5.9 3.3 1.3-6.6-4.9-4.5 6.6-.8z" fill="none" stroke="#4a4a4a" stroke-width="2.4" stroke-linejoin="round"></path></svg>
<svg class="a" style="left:159.5px;top:546.86px" width="12" height="7" viewBox="0 0 12 7"><path d="M1 5.8 C2.3 4.3 3.4 2.6 4.4 2.6 C5.5 2.6 6 4.9 7.1 4.9 C8.2 4.9 9.4 2.9 10.6 2" fill="none" stroke="#404040" stroke-width="1.6" stroke-linecap="round"></path></svg>
<div class="a" style="left:203.25px;top:550px;width:3.5px;height:1px;background:#333"></div>
<div class="a" style="left:279.25px;top:550px;width:3.5px;height:1px;background:#333"></div>
<div class="a" style="left:368.25px;top:550px;width:3.5px;height:1px;background:#333"></div>
<div class="a" style="left:444.25px;top:550px;width:3.5px;height:1px;background:#333"></div>
<div class="t" style="left:473.30px;width:80px;text-align:center;top:545.26px;font-size:10px;font-weight:bold;color:#1f1f7a;transform:scaleX(1.055);transform-origin:50% 0">1.800,0</div>
<div class="t" style="left:544.20px;width:80px;text-align:center;top:545.26px;font-size:10px;font-weight:bold;color:#2b8a2b;transform:scaleX(1.05);transform-origin:50% 0">+71,0</div>
<div class="t" style="left:611.00px;width:80px;text-align:center;top:545.26px;font-size:10px;font-weight:bold;color:#2b8a2b;transform:scaleX(1.03);transform-origin:50% 0">4,11 %</div>
<div class="t" style="left:624.00px;width:120px;text-align:right;top:545.26px;font-size:10px;font-weight:normal;color:#222;transform:scaleX(1.075);transform-origin:100% 0">50.000</div>
<div class="t" style="left:692.30px;width:120px;text-align:right;top:545.26px;font-size:10px;font-weight:normal;color:#222;transform:scaleX(1.075);transform-origin:100% 0">50.000.000</div>
<div class="a" style="left:852.25px;top:550px;width:3.5px;height:1px;background:#333"></div>
<div class="t" style="left:894.50px;width:80px;text-align:center;top:545.26px;font-size:10px;font-weight:normal;color:#222;transform:scaleX(1.05);transform-origin:50% 0">1.729,0</div>
<div class="t" style="left:972.00px;width:80px;text-align:center;top:545.26px;font-size:10px;font-weight:normal;color:#222;transform:scaleX(1.05);transform-origin:50% 0">1.771,0</div>
<div class="t" style="left:1047.50px;width:80px;text-align:center;top:545.26px;font-size:10px;font-weight:normal;color:#222;transform:scaleX(1.05);transform-origin:50% 0">1.800,0</div>
<div class="t" style="left:1129.50px;width:120px;text-align:right;top:545.26px;font-size:10px;font-weight:normal;color:#222;transform:scaleX(1.05);transform-origin:100% 0">21.772</div>
<div class="t" style="left:1264.00px;top:545.26px;font-size:10px;font-weight:normal;color:#3a9a3a;transform:scaleX(1.09);transform-origin:0 0">3</div>
<div class="a" style="left:0;top:579.14px;width:138px;height:1.5px;background:#2c3d6e"></div>
<div class="a" style="left:175px;top:579.14px;width:1096px;height:1.5px;background:#c0bfc0"></div>
<div class="t" style="left:13px;top:565.50px;font-size:10.3px;font-weight:bold;color:#fff;transform:scaleX(0.93);transform-origin:0 0">DLR/JUL26</div>
<svg class="a" style="left:143.8px;top:564.10px" width="12" height="12" viewBox="0 0 24 24"><path d="M12 2.5l2.9 6.1 6.6.8-4.9 4.5 1.3 6.6L12 17.2l-5.9 3.3 1.3-6.6-4.9-4.5 6.6-.8z" fill="none" stroke="#4a4a4a" stroke-width="2.4" stroke-linejoin="round"></path></svg>
<svg class="a" style="left:159.5px;top:567.30px" width="12" height="7" viewBox="0 0 12 7"><path d="M1 5.8 C2.3 4.3 3.4 2.6 4.4 2.6 C5.5 2.6 6 4.9 7.1 4.9 C8.2 4.9 9.4 2.9 10.6 2" fill="none" stroke="#404040" stroke-width="1.6" stroke-linecap="round"></path></svg>
<div class="a" style="left:203.25px;top:570px;width:3.5px;height:1px;background:#333"></div>
<div class="a" style="left:279.25px;top:570px;width:3.5px;height:1px;background:#333"></div>
<div class="a" style="left:368.25px;top:570px;width:3.5px;height:1px;background:#333"></div>
<div class="a" style="left:444.25px;top:570px;width:3.5px;height:1px;background:#333"></div>
<div class="t" style="left:473.30px;width:80px;text-align:center;top:565.70px;font-size:10px;font-weight:bold;color:#1f1f7a;transform:scaleX(1.055);transform-origin:50% 0">1.858,5</div>
<div class="t" style="left:544.20px;width:80px;text-align:center;top:565.70px;font-size:10px;font-weight:bold;color:#2b8a2b;transform:scaleX(1.05);transform-origin:50% 0">+88,5</div>
<div class="t" style="left:611.00px;width:80px;text-align:center;top:565.70px;font-size:10px;font-weight:bold;color:#2b8a2b;transform:scaleX(1.03);transform-origin:50% 0">5,00 %</div>
<div class="t" style="left:624.00px;width:120px;text-align:right;top:565.70px;font-size:10px;font-weight:normal;color:#222;transform:scaleX(1.075);transform-origin:100% 0">1</div>
<div class="t" style="left:692.30px;width:120px;text-align:right;top:565.70px;font-size:10px;font-weight:normal;color:#222;transform:scaleX(1.075);transform-origin:100% 0">1.000</div>
<div class="a" style="left:852.25px;top:570px;width:3.5px;height:1px;background:#333"></div>
<div class="t" style="left:894.50px;width:80px;text-align:center;top:565.70px;font-size:10px;font-weight:normal;color:#222;transform:scaleX(1.05);transform-origin:50% 0">1.770,0</div>
<div class="t" style="left:972.00px;width:80px;text-align:center;top:565.70px;font-size:10px;font-weight:normal;color:#222;transform:scaleX(1.05);transform-origin:50% 0">1.858,5</div>
<div class="t" style="left:1047.50px;width:80px;text-align:center;top:565.70px;font-size:10px;font-weight:normal;color:#222;transform:scaleX(1.05);transform-origin:50% 0">1.858,5</div>
<div class="t" style="left:1129.50px;width:120px;text-align:right;top:565.70px;font-size:10px;font-weight:normal;color:#222;transform:scaleX(1.05);transform-origin:100% 0">1.496</div>
<div class="t" style="left:1264.00px;top:565.70px;font-size:10px;font-weight:normal;color:#3a9a3a;transform:scaleX(1.09);transform-origin:0 0">3</div>
<div class="a" style="left:0;top:599.58px;width:138px;height:1.5px;background:#2c3d6e"></div>
<div class="a" style="left:175px;top:599.58px;width:1096px;height:1.5px;background:#c0bfc0"></div>
<div class="t" style="left:13px;top:585.94px;font-size:10.3px;font-weight:bold;color:#fff;transform:scaleX(0.93);transform-origin:0 0">DLR/JUL26A</div>
<svg class="a" style="left:143.8px;top:584.54px" width="12" height="12" viewBox="0 0 24 24"><path d="M12 2.5l2.9 6.1 6.6.8-4.9 4.5 1.3 6.6L12 17.2l-5.9 3.3 1.3-6.6-4.9-4.5 6.6-.8z" fill="none" stroke="#4a4a4a" stroke-width="2.4" stroke-linejoin="round"></path></svg>
<svg class="a" style="left:159.5px;top:587.74px" width="12" height="7" viewBox="0 0 12 7"><path d="M1 5.8 C2.3 4.3 3.4 2.6 4.4 2.6 C5.5 2.6 6 4.9 7.1 4.9 C8.2 4.9 9.4 2.9 10.6 2" fill="none" stroke="#404040" stroke-width="1.6" stroke-linecap="round"></path></svg>
<div class="a" style="left:203.25px;top:591px;width:3.5px;height:1px;background:#333"></div>
<div class="a" style="left:279.25px;top:591px;width:3.5px;height:1px;background:#333"></div>
<div class="a" style="left:368.25px;top:591px;width:3.5px;height:1px;background:#333"></div>
<div class="a" style="left:444.25px;top:591px;width:3.5px;height:1px;background:#333"></div>
<div class="a" style="left:511.55px;top:591px;width:3.5px;height:1px;background:#333"></div>
<div class="a" style="left:582.45px;top:591px;width:3.5px;height:1px;background:#333"></div>
<div class="a" style="left:649.25px;top:591px;width:3.5px;height:1px;background:#333"></div>
<div class="t" style="left:624.00px;width:120px;text-align:right;top:586.14px;font-size:10px;font-weight:normal;color:#222;transform:scaleX(1.075);transform-origin:100% 0">40.000</div>
<div class="t" style="left:692.30px;width:120px;text-align:right;top:586.14px;font-size:10px;font-weight:normal;color:#222;transform:scaleX(1.075);transform-origin:100% 0">40.000.000</div>
<div class="a" style="left:852.25px;top:591px;width:3.5px;height:1px;background:#333"></div>
<div class="t" style="left:894.50px;width:80px;text-align:center;top:586.14px;font-size:10px;font-weight:normal;color:#222;transform:scaleX(1.05);transform-origin:50% 0">1.770,0</div>
<div class="a" style="left:1010.25px;top:591px;width:3.5px;height:1px;background:#333"></div>
<div class="a" style="left:1085.75px;top:591px;width:3.5px;height:1px;background:#333"></div>
<div class="t" style="left:1129.50px;width:120px;text-align:right;top:586.14px;font-size:10px;font-weight:normal;color:#222;transform:scaleX(1.05);transform-origin:100% 0">1.496</div>
<div class="a" style="left:0;top:620.02px;width:138px;height:1.5px;background:#2c3d6e"></div>
<div class="a" style="left:175px;top:620.02px;width:1096px;height:1.5px;background:#c0bfc0"></div>
<div class="t" style="left:13px;top:606.38px;font-size:10.3px;font-weight:bold;color:#fff;transform:scaleX(0.93);transform-origin:0 0">DLR/AGO26</div>
<svg class="a" style="left:143.8px;top:604.98px" width="12" height="12" viewBox="0 0 24 24"><path d="M12 2.5l2.9 6.1 6.6.8-4.9 4.5 1.3 6.6L12 17.2l-5.9 3.3 1.3-6.6-4.9-4.5 6.6-.8z" fill="none" stroke="#4a4a4a" stroke-width="2.4" stroke-linejoin="round"></path></svg>
<svg class="a" style="left:159.5px;top:608.18px" width="12" height="7" viewBox="0 0 12 7"><path d="M1 5.8 C2.3 4.3 3.4 2.6 4.4 2.6 C5.5 2.6 6 4.9 7.1 4.9 C8.2 4.9 9.4 2.9 10.6 2" fill="none" stroke="#404040" stroke-width="1.6" stroke-linecap="round"></path></svg>
<div class="a" style="left:203.25px;top:611px;width:3.5px;height:1px;background:#333"></div>
<div class="a" style="left:279.25px;top:611px;width:3.5px;height:1px;background:#333"></div>
<div class="a" style="left:368.25px;top:611px;width:3.5px;height:1px;background:#333"></div>
<div class="a" style="left:444.25px;top:611px;width:3.5px;height:1px;background:#333"></div>
<div class="a" style="left:511.55px;top:611px;width:3.5px;height:1px;background:#333"></div>
<div class="a" style="left:582.45px;top:611px;width:3.5px;height:1px;background:#333"></div>
<div class="a" style="left:649.25px;top:611px;width:3.5px;height:1px;background:#333"></div>
<div class="a" style="left:740.75px;top:611px;width:3.5px;height:1px;background:#333"></div>
<div class="a" style="left:809.25px;top:611px;width:3.5px;height:1px;background:#333"></div>
<div class="a" style="left:852.25px;top:611px;width:3.5px;height:1px;background:#333"></div>
<div class="t" style="left:894.50px;width:80px;text-align:center;top:606.58px;font-size:10px;font-weight:normal;color:#222;transform:scaleX(1.05);transform-origin:50% 0">1.811,0</div>
<div class="a" style="left:1010.25px;top:611px;width:3.5px;height:1px;background:#333"></div>
<div class="a" style="left:1085.75px;top:611px;width:3.5px;height:1px;background:#333"></div>
<div class="t" style="left:1129.50px;width:120px;text-align:right;top:606.58px;font-size:10px;font-weight:normal;color:#222;transform:scaleX(1.05);transform-origin:100% 0">2</div>
<div class="a" style="left:0;top:640.46px;width:138px;height:1.5px;background:#2c3d6e"></div>
<div class="a" style="left:175px;top:640.46px;width:1096px;height:1.5px;background:#c0bfc0"></div>
<div class="t" style="left:13px;top:626.82px;font-size:10.3px;font-weight:bold;color:#fff;transform:scaleX(0.93);transform-origin:0 0">DLR/AGO26A</div>
<svg class="a" style="left:143.8px;top:625.42px" width="12" height="12" viewBox="0 0 24 24"><path d="M12 2.5l2.9 6.1 6.6.8-4.9 4.5 1.3 6.6L12 17.2l-5.9 3.3 1.3-6.6-4.9-4.5 6.6-.8z" fill="none" stroke="#4a4a4a" stroke-width="2.4" stroke-linejoin="round"></path></svg>
<svg class="a" style="left:159.5px;top:628.62px" width="12" height="7" viewBox="0 0 12 7"><path d="M1 5.8 C2.3 4.3 3.4 2.6 4.4 2.6 C5.5 2.6 6 4.9 7.1 4.9 C8.2 4.9 9.4 2.9 10.6 2" fill="none" stroke="#404040" stroke-width="1.6" stroke-linecap="round"></path></svg>
<div class="a" style="left:203.25px;top:632px;width:3.5px;height:1px;background:#333"></div>
<div class="a" style="left:279.25px;top:632px;width:3.5px;height:1px;background:#333"></div>
<div class="a" style="left:368.25px;top:632px;width:3.5px;height:1px;background:#333"></div>
<div class="a" style="left:444.25px;top:632px;width:3.5px;height:1px;background:#333"></div>
<div class="a" style="left:511.55px;top:632px;width:3.5px;height:1px;background:#333"></div>
<div class="a" style="left:582.45px;top:632px;width:3.5px;height:1px;background:#333"></div>
<div class="a" style="left:649.25px;top:632px;width:3.5px;height:1px;background:#333"></div>
<div class="a" style="left:740.75px;top:632px;width:3.5px;height:1px;background:#333"></div>
<div class="a" style="left:809.25px;top:632px;width:3.5px;height:1px;background:#333"></div>
<div class="a" style="left:852.25px;top:632px;width:3.5px;height:1px;background:#333"></div>
<div class="a" style="left:932.75px;top:632px;width:3.5px;height:1px;background:#333"></div>
<div class="a" style="left:1010.25px;top:632px;width:3.5px;height:1px;background:#333"></div>
<div class="a" style="left:1085.75px;top:632px;width:3.5px;height:1px;background:#333"></div>
<div class="a" style="left:1245.75px;top:632px;width:3.5px;height:1px;background:#333"></div>
<div class="a" style="left:0;top:660.90px;width:138px;height:1.5px;background:#2c3d6e"></div>
<div class="a" style="left:175px;top:660.90px;width:1096px;height:1.5px;background:#c0bfc0"></div>
<div class="a" style="left:0;top:641.96px;width:138px;height:20.44px;background:#56638f"></div>
<div class="a" style="left:0;top:660.90px;width:138px;height:1.5px;background:#6a79a5"></div>
<div class="t" style="left:13px;top:647.26px;font-size:10.3px;font-weight:bold;color:#fff;transform:scaleX(0.93);transform-origin:0 0">DLR/SEP25/OCT25</div>
<svg class="a" style="left:143.8px;top:645.86px" width="12" height="12" viewBox="0 0 24 24"><path d="M12 2.5l2.9 6.1 6.6.8-4.9 4.5 1.3 6.6L12 17.2l-5.9 3.3 1.3-6.6-4.9-4.5 6.6-.8z" fill="none" stroke="#4a4a4a" stroke-width="2.4" stroke-linejoin="round"></path></svg>
<svg class="a" style="left:159.5px;top:649.06px" width="12" height="7" viewBox="0 0 12 7"><path d="M1 5.8 C2.3 4.3 3.4 2.6 4.4 2.6 C5.5 2.6 6 4.9 7.1 4.9 C8.2 4.9 9.4 2.9 10.6 2" fill="none" stroke="#404040" stroke-width="1.6" stroke-linecap="round"></path></svg>
<div class="a" style="left:203.25px;top:652px;width:3.5px;height:1px;background:#333"></div>
<div class="a" style="left:279.25px;top:652px;width:3.5px;height:1px;background:#333"></div>
<div class="a" style="left:368.25px;top:652px;width:3.5px;height:1px;background:#333"></div>
<div class="a" style="left:444.25px;top:652px;width:3.5px;height:1px;background:#333"></div>
<div class="t" style="left:473.30px;width:80px;text-align:center;top:647.46px;font-size:10px;font-weight:bold;color:#1f1f7a;transform:scaleX(1.055);transform-origin:50% 0">66,0</div>
<div class="a" style="left:582.45px;top:652px;width:3.5px;height:1px;background:#1f1f7a"></div>
<div class="a" style="left:649.25px;top:652px;width:3.5px;height:1px;background:#1f1f7a"></div>
<div class="t" style="left:624.00px;width:120px;text-align:right;top:647.46px;font-size:10px;font-weight:normal;color:#222;transform:scaleX(1.075);transform-origin:100% 0">4.526</div>
<div class="t" style="left:692.30px;width:120px;text-align:right;top:647.46px;font-size:10px;font-weight:normal;color:#222;transform:scaleX(1.075);transform-origin:100% 0">4.526.000</div>
<div class="a" style="left:852.25px;top:652px;width:3.5px;height:1px;background:#333"></div>
<div class="a" style="left:932.75px;top:652px;width:3.5px;height:1px;background:#333"></div>
<div class="t" style="left:972.00px;width:80px;text-align:center;top:647.46px;font-size:10px;font-weight:normal;color:#222;transform:scaleX(1.05);transform-origin:50% 0">59,0</div>
<div class="t" style="left:1047.50px;width:80px;text-align:center;top:647.46px;font-size:10px;font-weight:normal;color:#222;transform:scaleX(1.05);transform-origin:50% 0">68,0</div>
<div class="a" style="left:1245.75px;top:652px;width:3.5px;height:1px;background:#333"></div>
<div class="a" style="left:0;top:681.34px;width:138px;height:1.5px;background:#2c3d6e"></div>
<div class="a" style="left:175px;top:681.34px;width:1096px;height:1.5px;background:#c0bfc0"></div>
<div class="a" style="left:0;top:662.40px;width:138px;height:20.44px;background:#56638f"></div>
<div class="a" style="left:0;top:681.34px;width:138px;height:1.5px;background:#6a79a5"></div>
<div class="a" style="left:1133.5px;top:154.30px;width:50.5px;height:13.75px;z-index:2;background:linear-gradient(90deg,#ffa500,#ff7f50)"><div class="a" style="left:0;top:0;height:100%;width:47%;background:#29b050"></div></div>
<div class="a" style="left:1133.5px;top:174.74px;width:50.5px;height:13.75px;z-index:2;background:linear-gradient(90deg,#ffa500,#ff7f50)"><div class="a" style="left:0;top:0;height:100%;width:46%;background:#29b050"></div></div>
<div class="a" style="left:1133.5px;top:195.18px;width:50.5px;height:13.75px;z-index:2;background:linear-gradient(90deg,#ffa500,#ff7f50)"><div class="a" style="left:0;top:0;height:100%;width:51%;background:#29b050"></div></div>
<div class="a" style="left:1133.5px;top:215.62px;width:50.5px;height:13.75px;z-index:2;background:linear-gradient(90deg,#ffa500,#ff7f50)"><div class="a" style="left:0;top:0;height:100%;width:75%;background:#29b050"></div></div>
<div class="a" style="left:1133.5px;top:236.06px;width:50.5px;height:13.75px;z-index:2;background:linear-gradient(90deg,#ffa500,#ff7f50)"><div class="a" style="left:0;top:0;height:100%;width:33%;background:#29b050"></div></div>
<div class="a" style="left:1052px;top:255.45px;width:75px;height:15.5px;border:2px solid #3b9a5e"></div>
<div class="a" style="left:1133.5px;top:256.50px;width:50.5px;height:13.75px;z-index:2;background:linear-gradient(90deg,#ffa500,#ff7f50)"><div class="a" style="left:0;top:0;height:100%;width:100%;background:#29b050"></div></div>
<div class="a" style="left:1133.5px;top:276.94px;width:50.5px;height:13.75px;z-index:2;background:linear-gradient(90deg,#ffa500,#ff7f50)"><div class="a" style="left:0;top:0;height:100%;width:39%;background:#29b050"></div></div>
<div class="a" style="left:976.5px;top:296.33px;width:75px;height:15.5px;border:2px solid #d0343a"></div>
<div class="a" style="left:1133.5px;top:297.38px;width:50.5px;height:13.75px;z-index:2;background:linear-gradient(90deg,#ffa500,#ff7f50)"><div class="a" style="left:0;top:0;height:100%;width:0%;background:#29b050"></div></div>
<div class="a" style="left:1133.5px;top:317.82px;width:50.5px;height:13.75px;z-index:2;background:linear-gradient(90deg,#ffa500,#ff7f50)"><div class="a" style="left:0;top:0;height:100%;width:42.5%;background:#29b050"></div></div>
<div class="a" style="left:1133.5px;top:338.26px;width:50.5px;height:13.75px;z-index:2;background:linear-gradient(90deg,#ffa500,#ff7f50)"><div class="a" style="left:0;top:0;height:100%;width:51%;background:#29b050"></div></div>
<div class="a" style="left:1052px;top:357.65px;width:75px;height:15.5px;border:2px solid #3b9a5e"></div>
<div class="a" style="left:1133.5px;top:358.70px;width:50.5px;height:13.75px;z-index:2;background:linear-gradient(90deg,#ffa500,#ff7f50)"><div class="a" style="left:0;top:0;height:100%;width:100%;background:#29b050"></div></div>
<div class="a" style="left:1133.5px;top:379.14px;width:50.5px;height:13.75px;z-index:2;background:linear-gradient(90deg,#ffa500,#ff7f50)"><div class="a" style="left:0;top:0;height:100%;width:51%;background:#29b050"></div></div>
<div class="a" style="left:1133.5px;top:399.58px;width:50.5px;height:13.75px;z-index:2;background:linear-gradient(90deg,#ffa500,#ff7f50)"><div class="a" style="left:0;top:0;height:100%;width:97%;background:#29b050"></div></div>
<div class="a" style="left:1133.5px;top:440.46px;width:50.5px;height:13.75px;z-index:2;background:linear-gradient(90deg,#ffa500,#ff7f50)"><div class="a" style="left:0;top:0;height:100%;width:94%;background:#29b050"></div></div>
<div class="a" style="left:1133.5px;top:460.90px;width:50.5px;height:13.75px;z-index:2;background:linear-gradient(90deg,#ffa500,#ff7f50)"><div class="a" style="left:0;top:0;height:100%;width:51%;background:#29b050"></div></div>
<div class="a" style="left:1133.5px;top:481.34px;width:50.5px;height:13.75px;z-index:2;background:linear-gradient(90deg,#ffa500,#ff7f50)"><div class="a" style="left:0;top:0;height:100%;width:48.5%;background:#29b050"></div></div>
<div class="a" style="left:1133.5px;top:501.78px;width:50.5px;height:13.75px;z-index:2;background:linear-gradient(90deg,#ffa500,#ff7f50)"><div class="a" style="left:0;top:0;height:100%;width:24%;background:#29b050"></div></div>
<div class="a" style="left:1133.5px;top:522.22px;width:50.5px;height:13.75px;z-index:2;background:linear-gradient(90deg,#ffa500,#ff7f50)"><div class="a" style="left:0;top:0;height:100%;width:80%;background:#29b050"></div></div>
<div class="a" style="left:1052px;top:541.61px;width:75px;height:15.5px;border:2px solid #3b9a5e"></div>
<div class="a" style="left:1133.5px;top:542.66px;width:50.5px;height:13.75px;z-index:2;background:linear-gradient(90deg,#ffa500,#ff7f50)"><div class="a" style="left:0;top:0;height:100%;width:100%;background:#29b050"></div></div>
<div class="a" style="left:1133.5px;top:563.10px;width:50.5px;height:13.75px;z-index:2;background:linear-gradient(90deg,#ffa500,#ff7f50)"><div class="a" style="left:0;top:0;height:100%;width:51%;background:#29b050"></div></div>
<div class="a" style="left:1133.5px;top:644.86px;width:50.5px;height:13.75px;z-index:2;background:linear-gradient(90deg,#ffa500,#ff7f50)"><div class="a" style="left:0;top:0;height:100%;width:77%;background:#29b050"></div></div>
<div class="a" style="left:1052px;top:664.25px;width:75px;height:15.5px;border:2px solid #3b9a5e"></div>
<div class="a" style="left:1133.5px;top:665.30px;width:50.5px;height:13.75px;z-index:2;background:linear-gradient(90deg,#ffa500,#ff7f50)"><div class="a" style="left:0;top:0;height:100%;width:100%;background:#29b050"></div></div>
<div class="a" style="left:0;top:667.5px;width:1280px;height:4px;background:#4a4a4a"></div>
<div class="a" style="left:1271px;top:5px;width:9px;height:662px;background:#f1f1f1"></div>
<div class="a" style="left:1271.5px;top:5.5px;width:8.5px;height:641px;background:#c1c1c1;border-radius:4px"></div>
<div class="t" style="left: 984px; top: 618.6px; font-size: 16.5px; color: rgba(150, 150, 150, 0.55); -webkit-text-stroke: 0px; z-index: 1; transform: scaleX(1.0578); transform-origin: 0px 0px;">Activar Windows</div>
<div class="t" style="left: 984px; top: 640.5px; font-size: 13px; color: rgba(150, 150, 150, 0.55); -webkit-text-stroke: 0px; z-index: 1; transform: scaleX(1.008); transform-origin: 0px 0px;">Ve a Configuración para activar Windows.</div></body></html>
